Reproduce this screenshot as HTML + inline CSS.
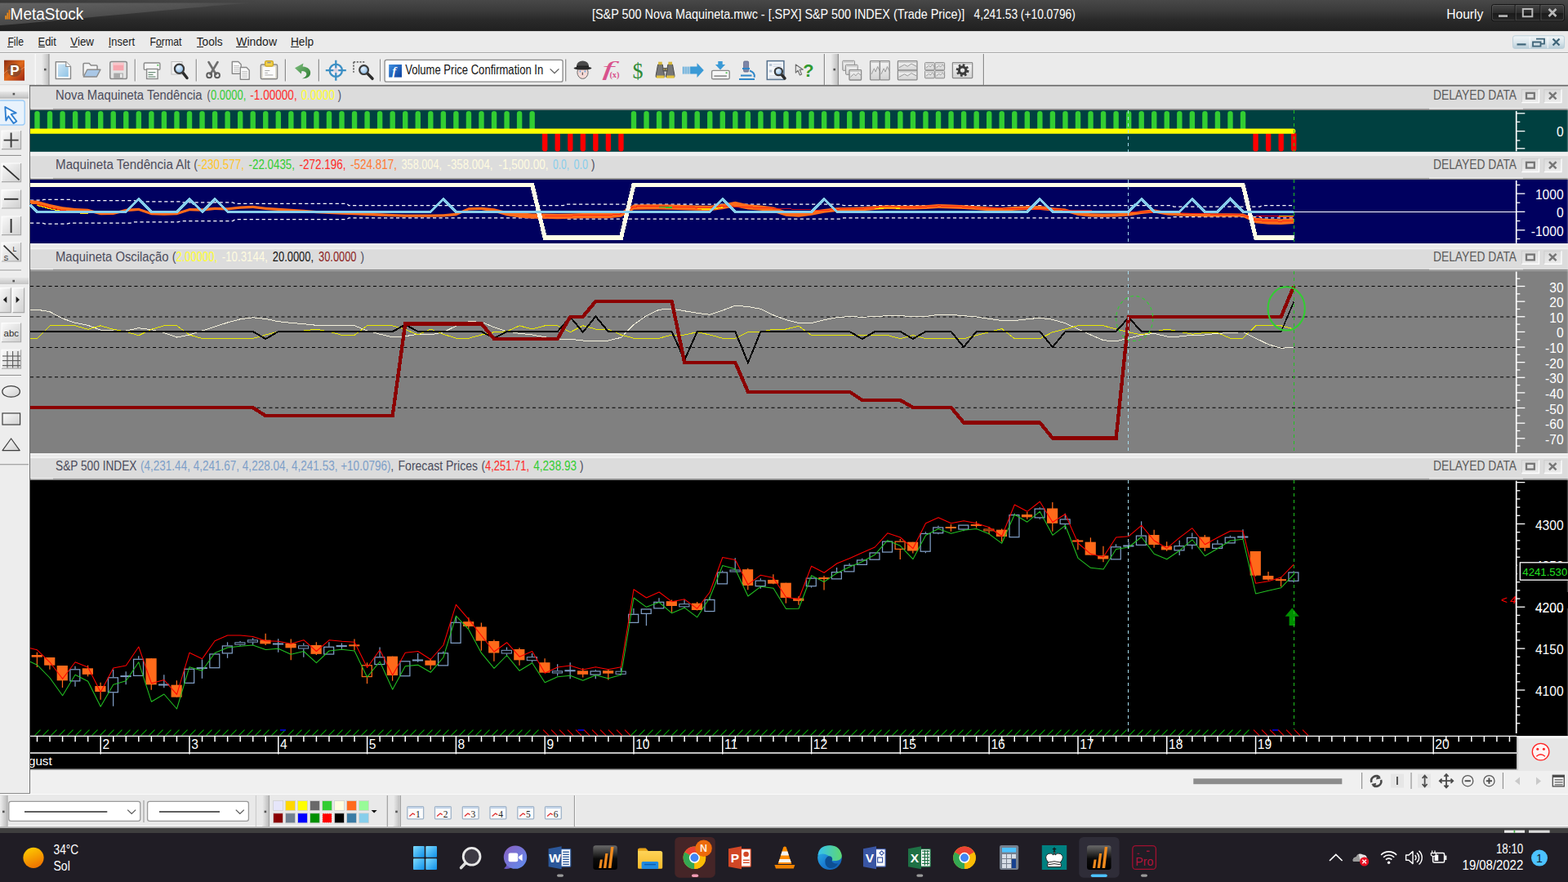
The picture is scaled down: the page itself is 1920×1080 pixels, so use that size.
<!DOCTYPE html>
<html lang="en"><head><meta charset="utf-8"><title>MetaStock - S&amp;P 500 Nova Maquineta</title>
<style>
html,body{margin:0;padding:0;background:#f0f0f0;overflow:hidden}
body{width:1920px;height:1080px}
svg{display:block;position:absolute;left:0;top:0}
text{font-family:"Liberation Sans",sans-serif;white-space:pre}
.c{shape-rendering:crispEdges}
</style></head><body>
<svg width="1920" height="1080" viewBox="0 0 1920 1080">
<defs>
<linearGradient id="gTitle" x1="0" y1="0" x2="0" y2="1">
<stop offset="0" stop-color="#484848"/><stop offset="0.35" stop-color="#3a3a3a"/><stop offset="0.62" stop-color="#2a2a2a"/><stop offset="1" stop-color="#202020"/></linearGradient>
<linearGradient id="gTopL" x1="0" y1="0" x2="1" y2="0"><stop offset="0" stop-color="#000" stop-opacity="0.2"/><stop offset="1" stop-color="#000" stop-opacity="0"/></linearGradient>
<linearGradient id="gGloss" x1="0" y1="0" x2="1" y2="0">
<stop offset="0" stop-color="#fff" stop-opacity="0.17"/><stop offset="0.7" stop-color="#fff" stop-opacity="0.1"/><stop offset="1" stop-color="#fff" stop-opacity="0.03"/></linearGradient>
<linearGradient id="gBtn" x1="0" y1="0" x2="0" y2="1"><stop offset="0" stop-color="#484848"/><stop offset="0.5" stop-color="#2c2c2c"/><stop offset="0.5" stop-color="#1a1a1a"/><stop offset="1" stop-color="#262626"/></linearGradient>
<linearGradient id="gMdi" x1="0" y1="0" x2="0" y2="1"><stop offset="0" stop-color="#f2f6f8"/><stop offset="0.5" stop-color="#dbe6ec"/><stop offset="1" stop-color="#b7ccd7"/></linearGradient>
<linearGradient id="gTool" x1="0" y1="0" x2="1" y2="1"><stop offset="0" stop-color="#fafafa"/><stop offset="1" stop-color="#cfcfcf"/></linearGradient>
<linearGradient id="gGrip" x1="0" y1="0" x2="1" y2="0"><stop offset="0" stop-color="#ebebeb"/><stop offset="1" stop-color="#bdbdbd"/></linearGradient>
<linearGradient id="gGripV" x1="0" y1="0" x2="0" y2="1"><stop offset="0" stop-color="#e6e6e6"/><stop offset="1" stop-color="#c4c4c4"/></linearGradient>
<linearGradient id="gHB" x1="0" y1="0" x2="0" y2="1"><stop offset="0" stop-color="#dadada"/><stop offset="1" stop-color="#ececec"/></linearGradient>
<linearGradient id="gSun" x1="0" y1="0" x2="0.4" y2="1"><stop offset="0" stop-color="#ffd400"/><stop offset="1" stop-color="#f07800"/></linearGradient>
</defs>
<rect x="0.00" y="0.00" width="1920.00" height="1080.00" fill="#f0f0f0" class="c"/>
<rect x="0.00" y="0.00" width="1920.00" height="38.60" fill="url(#gTitle)" />
<path d="M0,3.6 L310,3.6 C250,7 120,21 0,31 Z" fill="url(#gGloss)"/>
<rect x="0" y="0" width="330" height="3.6" fill="url(#gTopL)"/>
<rect x="0.00" y="38.15" width="1920.00" height="26.35" fill="#ebebeb" />
<rect x="0.00" y="64.50" width="1920.00" height="40.00" fill="#ebebeb" class="c"/>
<rect x="0.00" y="64.00" width="1920.00" height="1.00" fill="#a9a9a9" class="c"/>
<rect x="0.00" y="65.00" width="1920.00" height="1.00" fill="#f8f8f8" class="c"/>
<rect x="0.00" y="103.40" width="1920.00" height="1.00" fill="#d4d4d4" />
<rect x="36.00" y="104.00" width="1884.00" height="1.70" fill="#6f6f6f" />
<rect x="0.00" y="104.30" width="36.00" height="1.30" fill="#f2f2f2" />
<rect x="0.00" y="105.60" width="37.00" height="866.40" fill="#ededed" class="c"/>
<rect x="35.90" y="104.20" width="1.30" height="867.80" fill="#707070" />
<rect x="34.90" y="105.60" width="1.00" height="866.40" fill="#f8f8f8" />
<rect x="37.00" y="942.60" width="1883.00" height="29.40" fill="#f0f0f0" />
<rect x="1857.00" y="942.30" width="63.00" height="0.90" fill="#c9c9c9" />
<rect x="0.00" y="972.00" width="1920.00" height="41.50" fill="#e9e9e9" class="c"/>
<rect x="0.00" y="972.00" width="1920.00" height="1.00" fill="#fbfbfb" class="c"/>
<rect x="0.00" y="971.00" width="37.00" height="1.20" fill="#8a8a8a" class="c"/>
<rect x="0.00" y="1010.50" width="1920.00" height="1.50" fill="#fdfdfd" class="c"/>
<rect x="0.00" y="1012.00" width="1920.00" height="1.50" fill="#b4b4b4" class="c"/>
<rect x="0.00" y="1013.50" width="1920.00" height="6.30" fill="#3f3f3f" class="c"/>
<rect x="0.00" y="1019.80" width="1920.00" height="60.20" fill="#201d25" class="c"/>
<rect x="37.00" y="105.60" width="1883.00" height="29.00" fill="#dcdcdc" class="c"/>
<rect x="37.00" y="134.90" width="1883.00" height="50.90" fill="#004040" class="c"/>
<rect x="37.00" y="190.80" width="1883.00" height="28.80" fill="#dcdcdc" class="c"/>
<rect x="37.00" y="219.90" width="1883.00" height="78.50" fill="#00005f" class="c"/>
<rect x="37.00" y="305.00" width="1883.00" height="26.30" fill="#dcdcdc" class="c"/>
<rect x="37.00" y="331.60" width="1883.00" height="223.40" fill="#808080" class="c"/>
<rect x="37.00" y="560.80" width="1883.00" height="26.70" fill="#dcdcdc" class="c"/>
<rect x="37.00" y="587.80" width="1883.00" height="312.70" fill="#000000" class="c"/>
<rect x="37.00" y="185.80" width="1883.00" height="5.30" fill="#f1f1f1" />
<rect x="37.00" y="298.40" width="1883.00" height="6.90" fill="#f1f1f1" />
<rect x="37.00" y="300.40" width="1883.00" height="3.00" fill="#e9e9e9" />
<rect x="37.00" y="555.00" width="1883.00" height="6.10" fill="#f1f1f1" />
<rect x="37.00" y="557.00" width="1883.00" height="2.20" fill="#e9e9e9" />
<rect x="37.00" y="133.40" width="1883.00" height="1.50" fill="#5c5c5c" opacity="0.8"/>
<rect x="38.00" y="132.30" width="27.00" height="1.20" fill="#f4f4f4" />
<rect x="1750.00" y="132.30" width="115.00" height="1.20" fill="#f4f4f4" />
<rect x="37.00" y="218.40" width="1883.00" height="1.50" fill="#5c5c5c" opacity="0.8"/>
<rect x="38.00" y="217.30" width="27.00" height="1.20" fill="#f4f4f4" />
<rect x="1750.00" y="217.30" width="115.00" height="1.20" fill="#f4f4f4" />
<rect x="37.00" y="330.10" width="1883.00" height="1.50" fill="#5c5c5c" opacity="0.8"/>
<rect x="38.00" y="329.00" width="27.00" height="1.20" fill="#f4f4f4" />
<rect x="1750.00" y="329.00" width="115.00" height="1.20" fill="#f4f4f4" />
<rect x="37.00" y="586.30" width="1883.00" height="1.50" fill="#5c5c5c" opacity="0.8"/>
<rect x="38.00" y="585.20" width="27.00" height="1.20" fill="#f4f4f4" />
<rect x="1750.00" y="585.20" width="115.00" height="1.20" fill="#f4f4f4" />
<rect x="1918.80" y="105.60" width="1.20" height="795.00" fill="#e9e9e9" opacity="0.28"/>
<rect x="37.00" y="898.00" width="1820.00" height="43.20" fill="#000" />
<rect x="37.00" y="941.00" width="1820.00" height="1.50" fill="#5a5a5a" />
<rect x="1857.00" y="902.50" width="63.00" height="40.00" fill="#e6e6e6" class="c"/>
<rect x="1857.00" y="902.50" width="63.00" height="1.00" fill="#fafafa" class="c"/>
<rect x="1857.00" y="902.50" width="1.50" height="40.00" fill="#c8c8c8" class="c"/>
<rect x="6.20" y="19.10" width="1.80" height="4.50" fill="#e88a1a" />
<rect x="8.40" y="15.60" width="1.80" height="8.00" fill="#e88a1a" />
<rect x="10.60" y="12.10" width="1.80" height="11.50" fill="#f07d10" />
<text x="12.60" y="23.50" font-size="19.6" fill="#ffffff" textLength="89.6" lengthAdjust="spacingAndGlyphs" >MetaStock</text>
<text x="725.00" y="22.50" font-size="16.2" fill="#ffffff" textLength="456.3" lengthAdjust="spacingAndGlyphs" >[S&amp;P 500 Nova Maquineta.mwc - [.SPX] S&amp;P 500 INDEX (Trade Price)]</text>
<text x="1192.50" y="22.50" font-size="16.2" fill="#ffffff" textLength="124.3" lengthAdjust="spacingAndGlyphs" >4,241.53 (+10.0796)</text>
<text x="1771.30" y="22.50" font-size="16.2" fill="#ffffff" textLength="45.0" lengthAdjust="spacingAndGlyphs" >Hourly</text>
<rect x="1826.5" y="5.5" width="89" height="20.2" rx="3" fill="url(#gBtn)" stroke="#0c0c0c" stroke-width="1"/>
<rect x="1827.3" y="6.3" width="87.4" height="18.6" rx="2.5" fill="none" stroke="#6a6a6a" stroke-width="0.8" opacity="0.7"/>
<line x1="1855.20" y1="6.00" x2="1855.20" y2="25.20" stroke="#0c0c0c" stroke-width="1" />
<line x1="1856.10" y1="6.50" x2="1856.10" y2="24.80" stroke="#5a5a5a" stroke-width="0.8" />
<line x1="1886.00" y1="6.00" x2="1886.00" y2="25.20" stroke="#0c0c0c" stroke-width="1" />
<line x1="1886.90" y1="6.50" x2="1886.90" y2="24.80" stroke="#5a5a5a" stroke-width="0.8" />
<rect x="1835.00" y="18.30" width="11.00" height="2.60" fill="#b9b9b9" />
<rect x="1864.8" y="11" width="11.5" height="9.3" fill="none" stroke="#b9b9b9" stroke-width="2"/>
<path d="M1896.5,11 L1905.5,20 M1905.5,11 L1896.5,20" stroke="#b9b9b9" stroke-width="2.6" fill="none"/>
<rect x="1852.5" y="43.8" width="63" height="15.6" rx="2.5" fill="url(#gMdi)" stroke="#bcd0da" stroke-width="1"/>
<line x1="1873.20" y1="45.00" x2="1873.20" y2="59.00" stroke="#ffffff" stroke-width="1" opacity="0.9"/>
<line x1="1895.20" y1="45.00" x2="1895.20" y2="59.00" stroke="#ffffff" stroke-width="1" opacity="0.9"/>
<rect x="1857.50" y="53.30" width="11.00" height="2.20" fill="#3f6579" />
<path d="M1881,47.6 h10 v6 h-4.5 M1877,51.5 h9.5 v5.2 h-9.5 z" fill="none" stroke="#3f6579" stroke-width="1.8"/>
<path d="M1901.5,47.5 L1909.5,55.5 M1909.5,47.5 L1901.5,55.5" stroke="#3f6579" stroke-width="2.3" fill="none"/>
<text x="9.40" y="55.60" font-size="14.1" fill="#1b1b1b" textLength="19.6" lengthAdjust="spacingAndGlyphs" >File</text>
<rect x="9.40" y="57.40" width="6.60" height="1.00" fill="#1b1b1b" class="c"/>
<text x="46.50" y="55.60" font-size="14.1" fill="#1b1b1b" textLength="22.3" lengthAdjust="spacingAndGlyphs" >Edit</text>
<rect x="46.50" y="57.40" width="8.00" height="1.00" fill="#1b1b1b" class="c"/>
<text x="86.30" y="55.60" font-size="14.1" fill="#1b1b1b" textLength="28.7" lengthAdjust="spacingAndGlyphs" >View</text>
<rect x="86.30" y="57.40" width="9.00" height="1.00" fill="#1b1b1b" class="c"/>
<text x="132.80" y="55.60" font-size="14.1" fill="#1b1b1b" textLength="32.2" lengthAdjust="spacingAndGlyphs" >Insert</text>
<rect x="133.00" y="57.40" width="3.00" height="1.00" fill="#1b1b1b" class="c"/>
<text x="183.50" y="55.60" font-size="14.1" fill="#1b1b1b" textLength="39.0" lengthAdjust="spacingAndGlyphs" >Format</text>
<rect x="190.50" y="57.40" width="8.00" height="1.00" fill="#1b1b1b" class="c"/>
<text x="240.70" y="55.60" font-size="14.1" fill="#1b1b1b" textLength="32.0" lengthAdjust="spacingAndGlyphs" >Tools</text>
<rect x="240.50" y="57.40" width="8.00" height="1.00" fill="#1b1b1b" class="c"/>
<text x="289.30" y="55.60" font-size="14.1" fill="#1b1b1b" textLength="49.7" lengthAdjust="spacingAndGlyphs" >Window</text>
<rect x="289.30" y="57.40" width="13.70" height="1.00" fill="#1b1b1b" class="c"/>
<text x="356.00" y="55.60" font-size="14.1" fill="#1b1b1b" textLength="28.0" lengthAdjust="spacingAndGlyphs" >Help</text>
<rect x="356.00" y="57.40" width="10.00" height="1.00" fill="#1b1b1b" class="c"/>
<text x="68.00" y="122.10" font-size="15.6" fill="#4b4b5b" textLength="179.6" lengthAdjust="spacingAndGlyphs" >Nova Maquineta Tendência</text>
<text x="253.60" y="122.10" font-size="15.6" fill="#4b4b5b" textLength="4.0" lengthAdjust="spacingAndGlyphs" >(</text>
<text x="258.00" y="122.10" font-size="15.6" fill="#32cd32" textLength="43.4" lengthAdjust="spacingAndGlyphs" >0.0000,</text>
<text x="306.30" y="122.10" font-size="15.6" fill="#ff2a2a" textLength="57.4" lengthAdjust="spacingAndGlyphs" >-1.00000,</text>
<text x="368.70" y="122.10" font-size="15.6" fill="#ffff30" textLength="41.3" lengthAdjust="spacingAndGlyphs" >0.0000</text>
<text x="413.80" y="122.10" font-size="15.6" fill="#4b4b5b" textLength="4.2" lengthAdjust="spacingAndGlyphs" >)</text>
<text x="68.00" y="207.00" font-size="15.6" fill="#4b4b5b" textLength="165.0" lengthAdjust="spacingAndGlyphs" >Maquineta Tendência Alt</text>
<text x="237.30" y="207.00" font-size="15.6" fill="#4b4b5b" textLength="4.7" lengthAdjust="spacingAndGlyphs" >(</text>
<text x="242.00" y="207.00" font-size="15.6" fill="#ffc428" textLength="57.0" lengthAdjust="spacingAndGlyphs" >-230.577,</text>
<text x="304.50" y="207.00" font-size="15.6" fill="#32cd32" textLength="56.5" lengthAdjust="spacingAndGlyphs" >-22.0435,</text>
<text x="366.50" y="207.00" font-size="15.6" fill="#ff2a2a" textLength="57.0" lengthAdjust="spacingAndGlyphs" >-272.196,</text>
<text x="429.00" y="207.00" font-size="15.6" fill="#ff7a33" textLength="57.0" lengthAdjust="spacingAndGlyphs" >-524.817,</text>
<text x="491.50" y="207.00" font-size="15.6" fill="#fffbe0" textLength="49.5" lengthAdjust="spacingAndGlyphs" >358.004,</text>
<text x="547.50" y="207.00" font-size="15.6" fill="#fffbe0" textLength="56.0" lengthAdjust="spacingAndGlyphs" >-358.004,</text>
<text x="610.50" y="207.00" font-size="15.6" fill="#fffbe0" textLength="61.0" lengthAdjust="spacingAndGlyphs" >-1,500.00,</text>
<text x="677.00" y="207.00" font-size="15.6" fill="#87ceeb" textLength="20.0" lengthAdjust="spacingAndGlyphs" >0.0,</text>
<text x="702.50" y="207.00" font-size="15.6" fill="#87ceeb" textLength="17.5" lengthAdjust="spacingAndGlyphs" >0.0</text>
<text x="724.00" y="207.00" font-size="15.6" fill="#4b4b5b" textLength="4.5" lengthAdjust="spacingAndGlyphs" >)</text>
<text x="68.00" y="319.80" font-size="15.6" fill="#4b4b5b" textLength="138.5" lengthAdjust="spacingAndGlyphs" >Maquineta Oscilação</text>
<text x="210.70" y="319.80" font-size="15.6" fill="#4b4b5b" textLength="4.8" lengthAdjust="spacingAndGlyphs" >(</text>
<text x="215.50" y="319.80" font-size="15.6" fill="#ffff30" textLength="50.5" lengthAdjust="spacingAndGlyphs" >2.00000,</text>
<text x="271.80" y="319.80" font-size="15.6" fill="#fffbe0" textLength="56.2" lengthAdjust="spacingAndGlyphs" >-10.3144,</text>
<text x="333.80" y="319.80" font-size="15.6" fill="#111111" textLength="50.2" lengthAdjust="spacingAndGlyphs" >20.0000,</text>
<text x="390.00" y="319.80" font-size="15.6" fill="#8b1a1a" textLength="46.5" lengthAdjust="spacingAndGlyphs" >30.0000</text>
<text x="441.50" y="319.80" font-size="15.6" fill="#4b4b5b" textLength="4.5" lengthAdjust="spacingAndGlyphs" >)</text>
<text x="68.00" y="576.00" font-size="15.6" fill="#4b4b5b" textLength="99.5" lengthAdjust="spacingAndGlyphs" >S&amp;P 500 INDEX</text>
<text x="172.00" y="576.00" font-size="15.6" fill="#7d9fc8" textLength="306.5" lengthAdjust="spacingAndGlyphs" >(4,231.44, 4,241.67, 4,228.04, 4,241.53, +10.0796)</text>
<text x="478.50" y="576.00" font-size="15.6" fill="#4b4b5b" textLength="3.5" lengthAdjust="spacingAndGlyphs" >,</text>
<text x="487.50" y="576.00" font-size="15.6" fill="#4b4b5b" textLength="97.5" lengthAdjust="spacingAndGlyphs" >Forecast Prices</text>
<text x="589.50" y="576.00" font-size="15.6" fill="#4b4b5b" textLength="4.5" lengthAdjust="spacingAndGlyphs" >(</text>
<text x="594.00" y="576.00" font-size="15.6" fill="#ff2a2a" textLength="54.0" lengthAdjust="spacingAndGlyphs" >4,251.71,</text>
<text x="653.30" y="576.00" font-size="15.6" fill="#32cd32" textLength="52.7" lengthAdjust="spacingAndGlyphs" >4,238.93</text>
<text x="710.00" y="576.00" font-size="15.6" fill="#4b4b5b" textLength="4.5" lengthAdjust="spacingAndGlyphs" >)</text>
<text x="1755.00" y="122.10" font-size="15.6" fill="#5a5a5a" textLength="102.0" lengthAdjust="spacingAndGlyphs" >DELAYED DATA</text>
<rect x="1863.3" y="109.6" width="21.2" height="16" fill="url(#gHB)"/>
<path d="M1863.3,125.6 v-16 h21.2" fill="none" stroke="#cfcfcf" stroke-width="1.1"/>
<path d="M1863.3,125.6 h21.2 v-16" fill="none" stroke="#ffffff" stroke-width="1.3"/>
<rect x="1869.0" y="113.89999999999999" width="9.8" height="6.8" fill="none" stroke="#767676" stroke-width="2.3"/>
<rect x="1890.8" y="109.6" width="21.2" height="16" fill="url(#gHB)"/>
<path d="M1890.8,125.6 v-16 h21.2" fill="none" stroke="#cfcfcf" stroke-width="1.1"/>
<path d="M1890.8,125.6 h21.2 v-16" fill="none" stroke="#ffffff" stroke-width="1.3"/>
<path d="M1897.0,113.19999999999999 l8.6,8.2 M1905.6,113.19999999999999 l-8.6,8.2" stroke="#767676" stroke-width="2.5" fill="none"/>
<text x="1755.00" y="207.00" font-size="15.6" fill="#5a5a5a" textLength="102.0" lengthAdjust="spacingAndGlyphs" >DELAYED DATA</text>
<rect x="1863.3" y="194.5" width="21.2" height="16" fill="url(#gHB)"/>
<path d="M1863.3,210.5 v-16 h21.2" fill="none" stroke="#cfcfcf" stroke-width="1.1"/>
<path d="M1863.3,210.5 h21.2 v-16" fill="none" stroke="#ffffff" stroke-width="1.3"/>
<rect x="1869.0" y="198.8" width="9.8" height="6.8" fill="none" stroke="#767676" stroke-width="2.3"/>
<rect x="1890.8" y="194.5" width="21.2" height="16" fill="url(#gHB)"/>
<path d="M1890.8,210.5 v-16 h21.2" fill="none" stroke="#cfcfcf" stroke-width="1.1"/>
<path d="M1890.8,210.5 h21.2 v-16" fill="none" stroke="#ffffff" stroke-width="1.3"/>
<path d="M1897.0,198.1 l8.6,8.2 M1905.6,198.1 l-8.6,8.2" stroke="#767676" stroke-width="2.5" fill="none"/>
<text x="1755.00" y="319.80" font-size="15.6" fill="#5a5a5a" textLength="102.0" lengthAdjust="spacingAndGlyphs" >DELAYED DATA</text>
<rect x="1863.3" y="307.3" width="21.2" height="16" fill="url(#gHB)"/>
<path d="M1863.3,323.3 v-16 h21.2" fill="none" stroke="#cfcfcf" stroke-width="1.1"/>
<path d="M1863.3,323.3 h21.2 v-16" fill="none" stroke="#ffffff" stroke-width="1.3"/>
<rect x="1869.0" y="311.6" width="9.8" height="6.8" fill="none" stroke="#767676" stroke-width="2.3"/>
<rect x="1890.8" y="307.3" width="21.2" height="16" fill="url(#gHB)"/>
<path d="M1890.8,323.3 v-16 h21.2" fill="none" stroke="#cfcfcf" stroke-width="1.1"/>
<path d="M1890.8,323.3 h21.2 v-16" fill="none" stroke="#ffffff" stroke-width="1.3"/>
<path d="M1897.0,310.90000000000003 l8.6,8.2 M1905.6,310.90000000000003 l-8.6,8.2" stroke="#767676" stroke-width="2.5" fill="none"/>
<text x="1755.00" y="576.00" font-size="15.6" fill="#5a5a5a" textLength="102.0" lengthAdjust="spacingAndGlyphs" >DELAYED DATA</text>
<rect x="1863.3" y="563.5" width="21.2" height="16" fill="url(#gHB)"/>
<path d="M1863.3,579.5 v-16 h21.2" fill="none" stroke="#cfcfcf" stroke-width="1.1"/>
<path d="M1863.3,579.5 h21.2 v-16" fill="none" stroke="#ffffff" stroke-width="1.3"/>
<rect x="1869.0" y="567.8" width="9.8" height="6.8" fill="none" stroke="#767676" stroke-width="2.3"/>
<rect x="1890.8" y="563.5" width="21.2" height="16" fill="url(#gHB)"/>
<path d="M1890.8,579.5 v-16 h21.2" fill="none" stroke="#cfcfcf" stroke-width="1.1"/>
<path d="M1890.8,579.5 h21.2 v-16" fill="none" stroke="#ffffff" stroke-width="1.3"/>
<path d="M1897.0,567.1 l8.6,8.2 M1905.6,567.1 l-8.6,8.2" stroke="#767676" stroke-width="2.5" fill="none"/>
<path d="M42.30,158.1 V139.3 a3.2,3.2 0 0 1 6.4,0 V158.1 Z" fill="#32cd32"/>
<path d="M57.84,158.1 V139.3 a3.2,3.2 0 0 1 6.4,0 V158.1 Z" fill="#32cd32"/>
<path d="M73.38,158.1 V139.3 a3.2,3.2 0 0 1 6.4,0 V158.1 Z" fill="#32cd32"/>
<path d="M88.93,158.1 V139.3 a3.2,3.2 0 0 1 6.4,0 V158.1 Z" fill="#32cd32"/>
<path d="M104.47,158.1 V139.3 a3.2,3.2 0 0 1 6.4,0 V158.1 Z" fill="#32cd32"/>
<path d="M120.01,158.1 V139.3 a3.2,3.2 0 0 1 6.4,0 V158.1 Z" fill="#32cd32"/>
<path d="M135.55,158.1 V139.3 a3.2,3.2 0 0 1 6.4,0 V158.1 Z" fill="#32cd32"/>
<path d="M151.10,158.1 V139.3 a3.2,3.2 0 0 1 6.4,0 V158.1 Z" fill="#32cd32"/>
<path d="M166.64,158.1 V139.3 a3.2,3.2 0 0 1 6.4,0 V158.1 Z" fill="#32cd32"/>
<path d="M182.18,158.1 V139.3 a3.2,3.2 0 0 1 6.4,0 V158.1 Z" fill="#32cd32"/>
<path d="M197.72,158.1 V139.3 a3.2,3.2 0 0 1 6.4,0 V158.1 Z" fill="#32cd32"/>
<path d="M213.27,158.1 V139.3 a3.2,3.2 0 0 1 6.4,0 V158.1 Z" fill="#32cd32"/>
<path d="M228.81,158.1 V139.3 a3.2,3.2 0 0 1 6.4,0 V158.1 Z" fill="#32cd32"/>
<path d="M244.35,158.1 V139.3 a3.2,3.2 0 0 1 6.4,0 V158.1 Z" fill="#32cd32"/>
<path d="M259.89,158.1 V139.3 a3.2,3.2 0 0 1 6.4,0 V158.1 Z" fill="#32cd32"/>
<path d="M275.44,158.1 V139.3 a3.2,3.2 0 0 1 6.4,0 V158.1 Z" fill="#32cd32"/>
<path d="M290.98,158.1 V139.3 a3.2,3.2 0 0 1 6.4,0 V158.1 Z" fill="#32cd32"/>
<path d="M306.52,158.1 V139.3 a3.2,3.2 0 0 1 6.4,0 V158.1 Z" fill="#32cd32"/>
<path d="M322.06,158.1 V139.3 a3.2,3.2 0 0 1 6.4,0 V158.1 Z" fill="#32cd32"/>
<path d="M337.61,158.1 V139.3 a3.2,3.2 0 0 1 6.4,0 V158.1 Z" fill="#32cd32"/>
<path d="M353.15,158.1 V139.3 a3.2,3.2 0 0 1 6.4,0 V158.1 Z" fill="#32cd32"/>
<path d="M368.69,158.1 V139.3 a3.2,3.2 0 0 1 6.4,0 V158.1 Z" fill="#32cd32"/>
<path d="M384.23,158.1 V139.3 a3.2,3.2 0 0 1 6.4,0 V158.1 Z" fill="#32cd32"/>
<path d="M399.78,158.1 V139.3 a3.2,3.2 0 0 1 6.4,0 V158.1 Z" fill="#32cd32"/>
<path d="M415.32,158.1 V139.3 a3.2,3.2 0 0 1 6.4,0 V158.1 Z" fill="#32cd32"/>
<path d="M430.86,158.1 V139.3 a3.2,3.2 0 0 1 6.4,0 V158.1 Z" fill="#32cd32"/>
<path d="M446.40,158.1 V139.3 a3.2,3.2 0 0 1 6.4,0 V158.1 Z" fill="#32cd32"/>
<path d="M461.94,158.1 V139.3 a3.2,3.2 0 0 1 6.4,0 V158.1 Z" fill="#32cd32"/>
<path d="M477.49,158.1 V139.3 a3.2,3.2 0 0 1 6.4,0 V158.1 Z" fill="#32cd32"/>
<path d="M493.03,158.1 V139.3 a3.2,3.2 0 0 1 6.4,0 V158.1 Z" fill="#32cd32"/>
<path d="M508.57,158.1 V139.3 a3.2,3.2 0 0 1 6.4,0 V158.1 Z" fill="#32cd32"/>
<path d="M524.11,158.1 V139.3 a3.2,3.2 0 0 1 6.4,0 V158.1 Z" fill="#32cd32"/>
<path d="M539.66,158.1 V139.3 a3.2,3.2 0 0 1 6.4,0 V158.1 Z" fill="#32cd32"/>
<path d="M555.20,158.1 V139.3 a3.2,3.2 0 0 1 6.4,0 V158.1 Z" fill="#32cd32"/>
<path d="M570.74,158.1 V139.3 a3.2,3.2 0 0 1 6.4,0 V158.1 Z" fill="#32cd32"/>
<path d="M586.28,158.1 V139.3 a3.2,3.2 0 0 1 6.4,0 V158.1 Z" fill="#32cd32"/>
<path d="M601.83,158.1 V139.3 a3.2,3.2 0 0 1 6.4,0 V158.1 Z" fill="#32cd32"/>
<path d="M617.37,158.1 V139.3 a3.2,3.2 0 0 1 6.4,0 V158.1 Z" fill="#32cd32"/>
<path d="M632.91,158.1 V139.3 a3.2,3.2 0 0 1 6.4,0 V158.1 Z" fill="#32cd32"/>
<path d="M648.45,158.1 V139.3 a3.2,3.2 0 0 1 6.4,0 V158.1 Z" fill="#32cd32"/>
<path d="M664.00,163.3 V182.3 a3.2,3.2 0 0 0 6.4,0 V163.3 Z" fill="#ff0000"/>
<path d="M679.54,163.3 V182.3 a3.2,3.2 0 0 0 6.4,0 V163.3 Z" fill="#ff0000"/>
<path d="M695.08,163.3 V182.3 a3.2,3.2 0 0 0 6.4,0 V163.3 Z" fill="#ff0000"/>
<path d="M710.62,163.3 V182.3 a3.2,3.2 0 0 0 6.4,0 V163.3 Z" fill="#ff0000"/>
<path d="M726.17,163.3 V182.3 a3.2,3.2 0 0 0 6.4,0 V163.3 Z" fill="#ff0000"/>
<path d="M741.71,163.3 V182.3 a3.2,3.2 0 0 0 6.4,0 V163.3 Z" fill="#ff0000"/>
<path d="M757.25,163.3 V182.3 a3.2,3.2 0 0 0 6.4,0 V163.3 Z" fill="#ff0000"/>
<path d="M772.79,158.1 V139.3 a3.2,3.2 0 0 1 6.4,0 V158.1 Z" fill="#32cd32"/>
<path d="M788.34,158.1 V139.3 a3.2,3.2 0 0 1 6.4,0 V158.1 Z" fill="#32cd32"/>
<path d="M803.88,158.1 V139.3 a3.2,3.2 0 0 1 6.4,0 V158.1 Z" fill="#32cd32"/>
<path d="M819.42,158.1 V139.3 a3.2,3.2 0 0 1 6.4,0 V158.1 Z" fill="#32cd32"/>
<path d="M834.96,158.1 V139.3 a3.2,3.2 0 0 1 6.4,0 V158.1 Z" fill="#32cd32"/>
<path d="M850.50,158.1 V139.3 a3.2,3.2 0 0 1 6.4,0 V158.1 Z" fill="#32cd32"/>
<path d="M866.05,158.1 V139.3 a3.2,3.2 0 0 1 6.4,0 V158.1 Z" fill="#32cd32"/>
<path d="M881.59,158.1 V139.3 a3.2,3.2 0 0 1 6.4,0 V158.1 Z" fill="#32cd32"/>
<path d="M897.13,158.1 V139.3 a3.2,3.2 0 0 1 6.4,0 V158.1 Z" fill="#32cd32"/>
<path d="M912.67,158.1 V139.3 a3.2,3.2 0 0 1 6.4,0 V158.1 Z" fill="#32cd32"/>
<path d="M928.22,158.1 V139.3 a3.2,3.2 0 0 1 6.4,0 V158.1 Z" fill="#32cd32"/>
<path d="M943.76,158.1 V139.3 a3.2,3.2 0 0 1 6.4,0 V158.1 Z" fill="#32cd32"/>
<path d="M959.30,158.1 V139.3 a3.2,3.2 0 0 1 6.4,0 V158.1 Z" fill="#32cd32"/>
<path d="M974.84,158.1 V139.3 a3.2,3.2 0 0 1 6.4,0 V158.1 Z" fill="#32cd32"/>
<path d="M990.39,158.1 V139.3 a3.2,3.2 0 0 1 6.4,0 V158.1 Z" fill="#32cd32"/>
<path d="M1005.93,158.1 V139.3 a3.2,3.2 0 0 1 6.4,0 V158.1 Z" fill="#32cd32"/>
<path d="M1021.47,158.1 V139.3 a3.2,3.2 0 0 1 6.4,0 V158.1 Z" fill="#32cd32"/>
<path d="M1037.01,158.1 V139.3 a3.2,3.2 0 0 1 6.4,0 V158.1 Z" fill="#32cd32"/>
<path d="M1052.56,158.1 V139.3 a3.2,3.2 0 0 1 6.4,0 V158.1 Z" fill="#32cd32"/>
<path d="M1068.10,158.1 V139.3 a3.2,3.2 0 0 1 6.4,0 V158.1 Z" fill="#32cd32"/>
<path d="M1083.64,158.1 V139.3 a3.2,3.2 0 0 1 6.4,0 V158.1 Z" fill="#32cd32"/>
<path d="M1099.18,158.1 V139.3 a3.2,3.2 0 0 1 6.4,0 V158.1 Z" fill="#32cd32"/>
<path d="M1114.73,158.1 V139.3 a3.2,3.2 0 0 1 6.4,0 V158.1 Z" fill="#32cd32"/>
<path d="M1130.27,158.1 V139.3 a3.2,3.2 0 0 1 6.4,0 V158.1 Z" fill="#32cd32"/>
<path d="M1145.81,158.1 V139.3 a3.2,3.2 0 0 1 6.4,0 V158.1 Z" fill="#32cd32"/>
<path d="M1161.35,158.1 V139.3 a3.2,3.2 0 0 1 6.4,0 V158.1 Z" fill="#32cd32"/>
<path d="M1176.90,158.1 V139.3 a3.2,3.2 0 0 1 6.4,0 V158.1 Z" fill="#32cd32"/>
<path d="M1192.44,158.1 V139.3 a3.2,3.2 0 0 1 6.4,0 V158.1 Z" fill="#32cd32"/>
<path d="M1207.98,158.1 V139.3 a3.2,3.2 0 0 1 6.4,0 V158.1 Z" fill="#32cd32"/>
<path d="M1223.52,158.1 V139.3 a3.2,3.2 0 0 1 6.4,0 V158.1 Z" fill="#32cd32"/>
<path d="M1239.06,158.1 V139.3 a3.2,3.2 0 0 1 6.4,0 V158.1 Z" fill="#32cd32"/>
<path d="M1254.61,158.1 V139.3 a3.2,3.2 0 0 1 6.4,0 V158.1 Z" fill="#32cd32"/>
<path d="M1270.15,158.1 V139.3 a3.2,3.2 0 0 1 6.4,0 V158.1 Z" fill="#32cd32"/>
<path d="M1285.69,158.1 V139.3 a3.2,3.2 0 0 1 6.4,0 V158.1 Z" fill="#32cd32"/>
<path d="M1301.23,158.1 V139.3 a3.2,3.2 0 0 1 6.4,0 V158.1 Z" fill="#32cd32"/>
<path d="M1316.78,158.1 V139.3 a3.2,3.2 0 0 1 6.4,0 V158.1 Z" fill="#32cd32"/>
<path d="M1332.32,158.1 V139.3 a3.2,3.2 0 0 1 6.4,0 V158.1 Z" fill="#32cd32"/>
<path d="M1347.86,158.1 V139.3 a3.2,3.2 0 0 1 6.4,0 V158.1 Z" fill="#32cd32"/>
<path d="M1363.40,158.1 V139.3 a3.2,3.2 0 0 1 6.4,0 V158.1 Z" fill="#32cd32"/>
<path d="M1378.95,158.1 V139.3 a3.2,3.2 0 0 1 6.4,0 V158.1 Z" fill="#32cd32"/>
<path d="M1394.49,158.1 V139.3 a3.2,3.2 0 0 1 6.4,0 V158.1 Z" fill="#32cd32"/>
<path d="M1410.03,158.1 V139.3 a3.2,3.2 0 0 1 6.4,0 V158.1 Z" fill="#32cd32"/>
<path d="M1425.57,158.1 V139.3 a3.2,3.2 0 0 1 6.4,0 V158.1 Z" fill="#32cd32"/>
<path d="M1441.12,158.1 V139.3 a3.2,3.2 0 0 1 6.4,0 V158.1 Z" fill="#32cd32"/>
<path d="M1456.66,158.1 V139.3 a3.2,3.2 0 0 1 6.4,0 V158.1 Z" fill="#32cd32"/>
<path d="M1472.20,158.1 V139.3 a3.2,3.2 0 0 1 6.4,0 V158.1 Z" fill="#32cd32"/>
<path d="M1487.74,158.1 V139.3 a3.2,3.2 0 0 1 6.4,0 V158.1 Z" fill="#32cd32"/>
<path d="M1503.29,158.1 V139.3 a3.2,3.2 0 0 1 6.4,0 V158.1 Z" fill="#32cd32"/>
<path d="M1518.83,158.1 V139.3 a3.2,3.2 0 0 1 6.4,0 V158.1 Z" fill="#32cd32"/>
<path d="M1534.37,163.3 V182.3 a3.2,3.2 0 0 0 6.4,0 V163.3 Z" fill="#ff0000"/>
<path d="M1549.91,163.3 V182.3 a3.2,3.2 0 0 0 6.4,0 V163.3 Z" fill="#ff0000"/>
<path d="M1565.46,163.3 V182.3 a3.2,3.2 0 0 0 6.4,0 V163.3 Z" fill="#ff0000"/>
<path d="M1581.00,163.3 V182.3 a3.2,3.2 0 0 0 6.4,0 V163.3 Z" fill="#ff0000"/>
<path d="M37,157.6 H1583.2 a3.1,3.1 0 0 1 0,6.200000000000017 H37 Z" fill="#ffff00"/>
<polyline points="37.0,245.2 52.0,245.2 53.0,244.3 88.0,244.3 90.0,245.5 163.0,245.5 175.0,246.9 220.0,246.9 222.0,247.8 285.0,247.8 288.0,249.4 425.0,249.4 427.0,251.7 690.0,251.7 692.0,250.1 1030.0,250.1 1033.0,251.7 1435.0,251.7 1437.0,253.0 1543.0,253.0 1545.0,251.7 1584.2,251.7" fill="none" stroke="#ffffff" stroke-width="1.25" stroke-dasharray="4.2 3.3"/>
<polyline points="37.0,273.1 52.0,273.1 55.0,274.2 82.0,274.2 86.0,273.0 160.0,273.0 164.0,271.9 218.0,271.9 222.0,270.5 285.0,270.5 288.0,268.6 425.0,268.6 427.0,266.8 690.0,266.8 692.0,268.0 1030.0,268.0 1033.0,266.8 1435.0,266.8 1437.0,265.5 1543.0,265.5 1545.0,266.8 1584.2,266.8" fill="none" stroke="#ffffff" stroke-width="1.25" stroke-dasharray="4.2 3.3"/>
<polygon points="37.0,244.97 45.5,245.80 61.0,249.97 76.6,253.30 92.1,254.97 107.7,255.80 123.2,259.97 138.8,259.63 154.3,255.80 169.8,254.63 185.4,259.97 200.9,260.30 216.5,259.97 232.0,254.97 247.6,255.30 263.1,253.63 278.6,254.13 294.2,252.47 309.7,251.63 325.3,253.63 340.8,254.63 356.3,255.80 371.9,256.63 387.4,257.97 403.0,258.63 418.5,259.30 434.1,259.97 449.6,260.63 465.1,261.30 480.7,261.97 496.2,262.47 511.8,262.47 527.3,262.47 542.9,262.13 558.4,260.80 573.9,254.13 589.5,253.63 605.0,255.30 620.6,258.97 636.1,260.13 651.7,261.47 667.2,261.47 682.7,261.80 698.3,261.47 713.8,260.97 729.4,260.97 744.9,260.97 760.5,259.30 776.0,250.47 791.5,250.13 807.1,250.13 822.6,250.47 838.2,250.97 853.7,251.47 869.2,251.80 884.8,249.80 900.3,246.80 915.9,250.13 931.4,251.47 947.0,253.47 962.5,258.47 978.0,260.20 993.6,258.03 1009.1,255.93 1024.7,254.27 1040.2,253.93 1055.8,253.43 1071.3,252.27 1086.8,251.27 1102.4,251.77 1117.9,251.77 1133.5,251.27 1149.0,250.10 1164.6,250.60 1180.1,251.27 1195.6,252.27 1211.2,253.43 1226.7,254.27 1242.3,252.93 1257.8,252.27 1273.3,252.10 1288.9,254.23 1304.4,255.40 1320.0,259.90 1335.5,261.23 1351.1,261.57 1366.6,261.23 1382.1,260.40 1397.7,257.90 1413.2,256.23 1428.8,259.23 1444.3,260.40 1459.9,260.90 1475.4,261.23 1490.9,261.23 1506.5,261.23 1522.0,261.57 1537.6,266.70 1553.1,268.03 1568.7,268.37 1584.2,267.37 1584.2,273.97 1568.7,274.97 1553.1,274.63 1537.6,273.30 1522.0,265.77 1506.5,265.43 1490.9,265.43 1475.4,265.43 1459.9,265.10 1444.3,264.60 1428.8,263.43 1413.2,260.43 1397.7,262.10 1382.1,264.60 1366.6,265.43 1351.1,265.77 1335.5,265.43 1320.0,264.10 1304.4,259.60 1288.9,258.43 1273.3,256.90 1257.8,257.07 1242.3,257.73 1226.7,259.07 1211.2,258.23 1195.6,257.07 1180.1,256.07 1164.6,255.40 1149.0,254.90 1133.5,256.07 1117.9,256.57 1102.4,256.57 1086.8,256.07 1071.3,257.07 1055.8,258.23 1040.2,258.73 1024.7,259.07 1009.1,260.73 993.6,263.63 978.0,265.80 962.5,264.87 947.0,259.87 931.4,257.87 915.9,256.53 900.3,253.20 884.8,256.20 869.2,258.20 853.7,257.87 838.2,257.37 822.6,256.87 807.1,256.53 791.5,256.53 776.0,256.87 760.5,265.70 744.9,267.37 729.4,267.37 713.8,267.37 698.3,267.87 682.7,268.20 667.2,267.87 651.7,267.87 636.1,266.53 620.6,264.37 605.0,259.70 589.5,257.03 573.9,257.53 558.4,264.20 542.9,265.53 527.3,265.87 511.8,265.87 496.2,265.87 480.7,265.37 465.1,264.70 449.6,264.03 434.1,263.37 418.5,262.70 403.0,262.03 387.4,261.37 371.9,260.03 356.3,259.20 340.8,258.03 325.3,257.03 309.7,255.03 294.2,255.87 278.6,257.53 263.1,257.03 247.6,258.70 232.0,258.37 216.5,263.37 200.9,263.70 185.4,263.37 169.8,258.03 154.3,259.20 138.8,263.03 123.2,263.37 107.7,259.20 92.1,258.37 76.6,256.70 61.0,253.37 45.5,249.20 37.0,248.37" fill="#ff6a1a"/>
<polyline points="37.0,247.9 45.5,248.7 61.0,252.9 76.6,256.2 92.1,257.9 107.7,258.7" fill="none" stroke="#ff6a1a" stroke-width="3.0" class="c" />
<polyline points="45.5,250.1 61.0,254.3 76.6,257.6 92.1,259.3" fill="none" stroke="#ff2a00" stroke-width="1.2" class="c" />
<polyline points="45.5,251.4 61.0,255.6 76.6,258.9 92.1,260.6 107.7,261.4" fill="none" stroke="#ffd800" stroke-width="1.2" class="c" />
<polyline points="667.2,264.1 682.7,264.4 698.3,264.1 713.8,263.6 729.4,263.6 744.9,263.6 760.5,261.9 776.0,253.1 791.5,252.7 807.1,252.7 822.6,253.1 838.2,253.6 853.7,254.1 869.2,254.4 884.8,252.4 1009.1,257.7 1024.7,256.1 1040.2,255.7 1055.8,255.2 1071.3,254.1 1086.8,253.1 1102.4,253.6 1117.9,253.6 1133.5,253.1 1149.0,251.9 1164.6,252.4 1180.1,253.1 1195.6,254.1 1522.0,263.1 1537.6,269.4 1553.1,270.7 1568.7,271.1 1584.2,270.1" fill="none" stroke="#ff1010" stroke-width="1.0" class="c" opacity="0.75"/>
<polyline points="1071.3,255.5 1086.8,254.5 1102.4,255.0" fill="none" stroke="#ffe000" stroke-width="1.4" class="c" />
<polyline points="698.3,265.5" fill="none" stroke="#30c030" stroke-width="1.4" class="c" />
<polyline points="853.7,255.7 869.2,256.0 884.8,254.0" fill="none" stroke="#ffd800" stroke-width="1.4" class="c" />
<polyline points="807.1,253.6 822.6,254.0" fill="none" stroke="#30c030" stroke-width="1.4" class="c" />
<polyline points="1537.6,264.2 1584.2,265.4" fill="none" stroke="#ff0000" stroke-width="1.2" class="c" />
<polyline points="1565.7,264.4 1584.2,264.6" fill="none" stroke="#ffd800" stroke-width="1.6" class="c" />
<polyline points="37.0,226.3 651.7,226.3 667.2,291.0 760.5,291.0 776.0,226.3 1522.0,226.3 1537.6,291.0 1584.7,291.0" fill="none" stroke="#fffde6" stroke-width="5.2" class="c" stroke-linejoin="miter"/>
<line x1="1584.20" y1="259.65" x2="1856.50" y2="259.65" stroke="#ffffff" stroke-width="1.1" class="c" />
<polyline points="37.0,250.8 45.5,259.2 61.0,259.2 76.6,259.2 92.1,259.2 107.7,259.2 123.2,259.2 138.8,259.2 154.3,259.2 169.8,243.7 185.4,259.2 200.9,259.2 216.5,259.2 232.0,243.7 247.6,259.2 263.1,243.7 278.6,259.2 294.2,259.2 309.7,259.2 325.3,259.2 340.8,259.2 356.3,259.2 371.9,259.2 387.4,259.2 403.0,259.2 418.5,259.2 434.1,259.2 449.6,259.2 465.1,259.2 480.7,259.2 496.2,259.2 511.8,259.2 527.3,259.2 542.9,243.7 558.4,259.2 573.9,259.2 589.5,259.2 605.0,259.2 620.6,259.2 636.1,259.2 651.7,259.2 667.2,259.2 682.7,259.2 698.3,259.2 713.8,259.2 729.4,259.2 744.9,259.2 760.5,259.2 776.0,259.2 791.5,259.2 807.1,259.2 822.6,259.2 838.2,259.2 853.7,259.2 869.2,259.2 884.8,243.7 900.3,259.2 915.9,259.2 931.4,259.2 947.0,259.2 962.5,259.2 978.0,259.2 993.6,259.2 1009.1,243.7 1024.7,259.2 1040.2,259.2 1055.8,259.2 1071.3,259.2 1086.8,259.2 1102.4,259.2 1117.9,259.2 1133.5,259.2 1149.0,259.2 1164.6,259.2 1180.1,259.2 1195.6,259.2 1211.2,259.2 1226.7,259.2 1242.3,259.2 1257.8,259.2 1273.3,243.7 1288.9,259.2 1304.4,259.2 1320.0,259.2 1335.5,259.2 1351.1,259.2 1366.6,259.2 1382.1,259.2 1397.7,243.7 1413.2,259.2 1428.8,259.2 1444.3,259.2 1459.9,243.7 1475.4,259.2 1490.9,259.2 1506.5,243.7 1522.0,259.2 1537.6,259.2 1553.1,259.2 1568.7,259.2 1584.2,259.2" fill="none" stroke="#87ceeb" stroke-width="3.3" class="c" stroke-linejoin="miter"/>
<line x1="37.00" y1="350.50" x2="1856.50" y2="350.50" stroke="#000000" stroke-width="1" stroke-dasharray="4 3.5"/>
<line x1="37.00" y1="388.00" x2="1856.50" y2="388.00" stroke="#000000" stroke-width="1" stroke-dasharray="4 3.5"/>
<line x1="37.00" y1="425.50" x2="1856.50" y2="425.50" stroke="#000000" stroke-width="1" stroke-dasharray="4 3.5"/>
<line x1="37.00" y1="461.75" x2="1856.50" y2="461.75" stroke="#000000" stroke-width="1" stroke-dasharray="4 3.5"/>
<line x1="37.00" y1="499.25" x2="1856.50" y2="499.25" stroke="#000000" stroke-width="1" stroke-dasharray="4 3.5"/>
<polyline points="37.0,379.2 45.5,379.2 61.0,381.7 76.6,390.0 92.1,395.3 107.7,398.3 123.2,404.2 138.8,405.0 154.3,405.0 169.8,401.7 185.4,403.7 200.9,407.5 216.5,413.0 232.0,410.0 247.6,405.0 263.1,400.0 278.6,395.0 294.2,390.8 309.7,388.8 325.3,390.5 340.8,393.7 356.3,395.3 371.9,396.7 387.4,398.3 403.0,398.8 418.5,398.8 434.1,398.8 449.6,405.0 465.1,409.2 480.7,412.8 496.2,411.7 511.8,409.2 527.3,410.0 542.9,406.7 558.4,399.2 573.9,393.7 589.5,394.2 605.0,400.8 620.6,405.8 636.1,408.3 651.7,410.0 667.2,412.8 682.7,415.3 698.3,415.3 713.8,417.0 729.4,417.0 744.9,417.0 760.5,413.3 776.0,397.5 791.5,386.7 807.1,379.2 822.6,378.0 838.2,380.8 853.7,383.3 869.2,385.3 884.8,380.0 900.3,374.2 915.9,375.5 931.4,378.3 947.0,385.8 962.5,391.7 978.0,395.5 993.6,395.5 1009.1,391.7 1024.7,388.7 1040.2,387.5 1055.8,388.3 1071.3,387.5 1086.8,386.7 1102.4,386.7 1117.9,387.5 1133.5,387.5 1149.0,385.3 1164.6,385.3 1180.1,386.7 1195.6,388.0 1211.2,390.3 1226.7,392.5 1242.3,392.5 1257.8,390.8 1273.3,389.2 1288.9,391.3 1304.4,395.8 1320.0,403.0 1335.5,410.0 1351.1,416.7 1366.6,417.8 1382.1,414.2 1397.7,410.3 1413.2,408.3 1428.8,412.0 1444.3,412.0 1459.9,410.3 1475.4,410.0 1490.9,408.3 1506.5,407.5 1522.0,406.7 1537.6,414.2 1553.1,421.7 1568.7,426.3 1584.2,425.3" fill="none" stroke="#f4f0dc" stroke-width="1.0" class="c" stroke-linejoin="miter"/>
<polyline points="37.0,414.5 45.5,414.5 61.0,398.8 76.6,398.8 92.1,398.8 107.7,403.3 123.2,398.8 138.8,403.3 154.3,406.2 169.8,410.8 185.4,403.3 200.9,398.8 216.5,398.8 232.0,410.0 247.6,414.5 263.1,414.5 278.6,414.5 294.2,414.5 309.7,414.5 325.3,410.0 340.8,406.2 356.3,406.2 371.9,405.0 387.4,403.0 403.0,406.2 418.5,410.3 434.1,410.3 449.6,398.8 465.1,398.8 480.7,398.8 496.2,403.3 511.8,410.0 527.3,403.0 542.9,409.2 558.4,414.2 573.9,414.2 589.5,410.0 605.0,406.7 620.6,405.8 636.1,398.8 651.7,403.0 667.2,398.8 682.7,398.8 698.3,406.7 713.8,398.8 729.4,403.0 744.9,403.0 760.5,410.0 776.0,414.2 791.5,414.2 807.1,414.2 822.6,410.0 838.2,410.0 853.7,406.7 869.2,410.0 884.8,414.2 900.3,414.2 915.9,406.7 931.4,406.7 947.0,403.0 962.5,403.0 978.0,399.2 993.6,410.5 1009.1,410.5 1024.7,410.5 1040.2,410.5 1055.8,410.5 1071.3,410.5 1086.8,410.5 1102.4,414.7 1117.9,410.5 1133.5,414.7 1149.0,414.7 1164.6,414.7 1180.1,414.7 1195.6,410.5 1211.2,406.7 1226.7,402.5 1242.3,414.7 1257.8,414.7 1273.3,414.7 1288.9,406.7 1304.4,403.0 1320.0,398.8 1335.5,398.8 1351.1,398.8 1366.6,403.0 1382.1,406.7 1397.7,410.0 1413.2,406.2 1428.8,403.0 1444.3,406.2 1459.9,409.2 1475.4,407.5 1490.9,407.5 1506.5,414.2 1522.0,414.2 1537.6,398.8 1553.1,398.8 1568.7,398.8 1584.2,403.0" fill="none" stroke="#e8e800" stroke-width="1.0" class="c" stroke-linejoin="miter"/>
<polyline points="37.0,406.0 45.5,406.0 61.0,406.0 76.6,406.0 92.1,406.0 107.7,406.0 123.2,406.0 138.8,406.0 154.3,406.0 169.8,406.0 185.4,406.0 200.9,406.0 216.5,406.0 232.0,406.0 247.6,406.0 263.1,406.0 278.6,406.0 294.2,406.0 309.7,406.0 325.3,415.0 340.8,406.0 356.3,406.0 371.9,406.0 387.4,406.0 403.0,406.0 418.5,406.0 434.1,406.0 449.6,406.0 465.1,406.0 480.7,406.0 496.2,397.5 511.8,406.0 527.3,406.0 542.9,406.0 558.4,406.0 573.9,406.0 589.5,406.0 605.0,414.2 620.6,406.0 636.1,406.0 651.7,406.0 667.2,406.0 682.7,406.0 698.3,388.3 713.8,406.7 729.4,387.5 744.9,406.0 760.5,406.0 776.0,406.0 791.5,406.0 807.1,406.0 822.6,406.0 838.2,440.8 853.7,406.0 869.2,406.0 884.8,406.0 900.3,406.0 915.9,444.2 931.4,406.0 947.0,406.0 962.5,406.0 978.0,406.0 993.6,406.0 1009.1,406.0 1024.7,406.0 1040.2,406.0 1055.8,415.0 1071.3,406.0 1086.8,406.0 1102.4,406.0 1117.9,415.0 1133.5,406.0 1149.0,406.0 1164.6,406.0 1180.1,425.0 1195.6,406.0 1211.2,406.0 1226.7,406.0 1242.3,406.0 1257.8,406.0 1273.3,406.0 1288.9,425.0 1304.4,406.0 1320.0,406.0 1335.5,406.0 1351.1,406.0 1366.6,406.0 1382.1,388.8 1397.7,406.0 1413.2,406.0 1428.8,406.0 1444.3,406.0 1459.9,406.0 1475.4,406.0 1490.9,406.0 1506.5,406.0 1522.0,406.0 1537.6,406.0 1553.1,406.0 1568.7,406.0" fill="none" stroke="#000000" stroke-width="2.0" class="c" stroke-linejoin="miter"/>
<polyline points="1568.7,406.0 1584.2,369.7" fill="none" stroke="#000" stroke-width="1.5" class="c" />
<polyline points="37.0,499.2 45.5,499.2 61.0,499.2 76.6,499.2 92.1,499.2 107.7,499.2 123.2,499.2 138.8,499.2 154.3,499.2 169.8,499.2 185.4,499.2 200.9,499.2 216.5,499.2 232.0,499.2 247.6,499.2 263.1,499.2 278.6,499.2 294.2,499.2 309.7,499.2 325.3,509.2 340.8,509.2 356.3,509.2 371.9,509.2 387.4,509.2 403.0,509.2 418.5,509.2 434.1,509.2 449.6,509.2 465.1,509.2 480.7,509.2 496.2,396.4 511.8,396.4 527.3,396.4 542.9,396.4 558.4,396.4 573.9,396.4 589.5,396.4 605.0,415.0 620.6,415.0 636.1,415.0 651.7,415.0 667.2,415.0 682.7,415.0 698.3,387.7 713.8,387.7 729.4,368.9 744.9,368.9 760.5,368.9 776.0,368.9 791.5,368.9 807.1,368.9 822.6,368.9 838.2,443.9 853.7,443.9 869.2,443.9 884.8,443.9 900.3,443.9 915.9,479.7 931.4,479.7 947.0,479.7 962.5,479.7 978.0,479.7 993.6,479.7 1009.1,479.7 1024.7,479.7 1040.2,479.7 1055.8,490.0 1071.3,490.0 1086.8,490.0 1102.4,490.0 1117.9,498.9 1133.5,498.9 1149.0,498.9 1164.6,498.9 1180.1,517.5 1195.6,517.5 1211.2,517.5 1226.7,517.5 1242.3,517.5 1257.8,517.5 1273.3,517.5 1288.9,536.5 1304.4,536.5 1320.0,536.5 1335.5,536.5 1351.1,536.5 1366.6,536.5 1382.1,387.7 1397.7,387.7 1413.2,387.7 1428.8,387.7 1444.3,387.7 1459.9,387.7 1475.4,387.7 1490.9,387.7 1506.5,387.7 1522.0,387.7 1537.6,387.7 1553.1,387.7 1568.7,387.7 1584.2,350.5" fill="none" stroke="#8b0000" stroke-width="4.3" class="c" stroke-linejoin="miter"/>
<ellipse cx="1389.2" cy="390" rx="22.5" ry="27.5" fill="none" stroke="#32cd32" stroke-width="1.1" stroke-dasharray="4 3.5"/>
<ellipse cx="1575.2" cy="377.9" rx="22.6" ry="26.6" fill="none" stroke="#32cd32" stroke-width="2.1"/>
<line x1="45.40" y1="798.67" x2="45.40" y2="817.00" stroke="#ff6a1a" stroke-width="1.25" />
<rect x="38.60" y="802.00" width="13.20" height="2.67" fill="#ff6a1a" />
<line x1="60.94" y1="805.00" x2="60.94" y2="819.67" stroke="#ff6a1a" stroke-width="1.25" />
<rect x="54.14" y="805.00" width="13.20" height="9.67" fill="#ff6a1a" />
<line x1="76.48" y1="815.00" x2="76.48" y2="842.00" stroke="#ff6a1a" stroke-width="1.25" />
<rect x="69.68" y="815.00" width="13.20" height="18.33" fill="#ff6a1a" />
<line x1="92.03" y1="815.83" x2="92.03" y2="819.17" stroke="#7f9dc4" stroke-width="1.25" />
<line x1="92.03" y1="834.50" x2="92.03" y2="840.83" stroke="#7f9dc4" stroke-width="1.25" />
<rect x="85.85" y="819.79" width="11.95" height="14.08" fill="none" stroke="#7f9dc4" stroke-width="1.25"/>
<line x1="107.57" y1="814.67" x2="107.57" y2="828.33" stroke="#ff6a1a" stroke-width="1.25" />
<rect x="100.77" y="818.33" width="13.20" height="7.50" fill="#ff6a1a" />
<line x1="123.11" y1="835.83" x2="123.11" y2="856.67" stroke="#ff6a1a" stroke-width="1.25" />
<rect x="116.31" y="840.00" width="13.20" height="7.00" fill="#ff6a1a" />
<line x1="138.65" y1="819.67" x2="138.65" y2="829.17" stroke="#7f9dc4" stroke-width="1.25" />
<line x1="138.65" y1="848.33" x2="138.65" y2="864.67" stroke="#7f9dc4" stroke-width="1.25" />
<rect x="132.48" y="829.79" width="11.95" height="17.92" fill="none" stroke="#7f9dc4" stroke-width="1.25"/>
<line x1="154.20" y1="822.17" x2="154.20" y2="838.33" stroke="#7f9dc4" stroke-width="1.25" />
<rect x="147.40" y="827.08" width="13.20" height="2.00" fill="#7f9dc4" />
<line x1="169.74" y1="803.33" x2="169.74" y2="806.67" stroke="#7f9dc4" stroke-width="1.25" />
<rect x="163.56" y="807.29" width="11.95" height="20.08" fill="none" stroke="#7f9dc4" stroke-width="1.25"/>
<line x1="185.28" y1="806.17" x2="185.28" y2="844.67" stroke="#ff6a1a" stroke-width="1.25" />
<rect x="178.48" y="806.17" width="13.20" height="32.17" fill="#ff6a1a" />
<line x1="200.82" y1="826.17" x2="200.82" y2="842.17" stroke="#7f9dc4" stroke-width="1.25" />
<rect x="194.02" y="837.50" width="13.20" height="2.00" fill="#7f9dc4" />
<line x1="216.37" y1="833.33" x2="216.37" y2="853.67" stroke="#ff6a1a" stroke-width="1.25" />
<rect x="209.57" y="838.67" width="13.20" height="15.00" fill="#ff6a1a" />
<rect x="225.73" y="819.29" width="11.95" height="17.08" fill="none" stroke="#7f9dc4" stroke-width="1.25"/>
<line x1="247.45" y1="807.50" x2="247.45" y2="830.83" stroke="#7f9dc4" stroke-width="1.25" />
<rect x="240.65" y="817.08" width="13.20" height="2.00" fill="#7f9dc4" />
<rect x="256.82" y="800.96" width="11.95" height="16.75" fill="none" stroke="#7f9dc4" stroke-width="1.25"/>
<line x1="278.54" y1="786.33" x2="278.54" y2="790.33" stroke="#7f9dc4" stroke-width="1.25" />
<line x1="278.54" y1="800.50" x2="278.54" y2="805.83" stroke="#7f9dc4" stroke-width="1.25" />
<rect x="272.36" y="790.96" width="11.95" height="8.92" fill="none" stroke="#7f9dc4" stroke-width="1.25"/>
<line x1="294.08" y1="785.00" x2="294.08" y2="786.33" stroke="#7f9dc4" stroke-width="1.25" />
<line x1="294.08" y1="789.67" x2="294.08" y2="790.83" stroke="#7f9dc4" stroke-width="1.25" />
<rect x="287.78" y="786.83" width="12.20" height="2.33" fill="none" stroke="#7f9dc4" stroke-width="1.0"/>
<line x1="309.62" y1="781.33" x2="309.62" y2="783.33" stroke="#7f9dc4" stroke-width="1.25" />
<line x1="309.62" y1="786.67" x2="309.62" y2="789.67" stroke="#7f9dc4" stroke-width="1.25" />
<rect x="303.32" y="783.83" width="12.20" height="2.33" fill="none" stroke="#7f9dc4" stroke-width="1.0"/>
<line x1="325.16" y1="775.83" x2="325.16" y2="790.00" stroke="#ff6a1a" stroke-width="1.25" />
<rect x="318.36" y="783.67" width="13.20" height="4.67" fill="#ff6a1a" />
<line x1="340.71" y1="782.17" x2="340.71" y2="798.67" stroke="#7f9dc4" stroke-width="1.25" />
<rect x="333.91" y="787.50" width="13.20" height="2.00" fill="#7f9dc4" />
<line x1="356.25" y1="782.50" x2="356.25" y2="808.33" stroke="#ff6a1a" stroke-width="1.25" />
<rect x="349.45" y="788.00" width="13.20" height="5.33" fill="#ff6a1a" />
<line x1="371.79" y1="787.50" x2="371.79" y2="790.33" stroke="#7f9dc4" stroke-width="1.25" />
<line x1="371.79" y1="794.50" x2="371.79" y2="804.67" stroke="#7f9dc4" stroke-width="1.25" />
<rect x="365.49" y="790.83" width="12.20" height="3.17" fill="none" stroke="#7f9dc4" stroke-width="1.0"/>
<line x1="387.33" y1="786.33" x2="387.33" y2="802.00" stroke="#ff6a1a" stroke-width="1.25" />
<rect x="380.53" y="790.00" width="13.20" height="10.83" fill="#ff6a1a" />
<line x1="402.88" y1="786.33" x2="402.88" y2="791.67" stroke="#7f9dc4" stroke-width="1.25" />
<rect x="396.70" y="792.29" width="11.95" height="8.75" fill="none" stroke="#7f9dc4" stroke-width="1.25"/>
<line x1="418.42" y1="787.50" x2="418.42" y2="794.67" stroke="#7f9dc4" stroke-width="1.25" />
<rect x="411.62" y="790.08" width="13.20" height="2.00" fill="#7f9dc4" />
<line x1="433.96" y1="782.50" x2="433.96" y2="796.33" stroke="#ff6a1a" stroke-width="1.25" />
<rect x="427.16" y="789.33" width="13.20" height="2.00" fill="#ff6a1a" />
<line x1="449.50" y1="811.33" x2="449.50" y2="814.17" stroke="#ff6a1a" stroke-width="1.25" />
<line x1="449.50" y1="829.17" x2="449.50" y2="837.17" stroke="#ff6a1a" stroke-width="1.25" />
<rect x="443.33" y="814.79" width="11.95" height="13.75" fill="none" stroke="#ff6a1a" stroke-width="1.25"/>
<line x1="465.04" y1="792.50" x2="465.04" y2="804.17" stroke="#7f9dc4" stroke-width="1.25" />
<rect x="458.87" y="804.79" width="11.95" height="8.75" fill="none" stroke="#7f9dc4" stroke-width="1.25"/>
<line x1="480.59" y1="803.67" x2="480.59" y2="833.67" stroke="#ff6a1a" stroke-width="1.25" />
<rect x="473.79" y="803.67" width="13.20" height="23.33" fill="#ff6a1a" />
<rect x="489.95" y="809.79" width="11.95" height="17.92" fill="none" stroke="#7f9dc4" stroke-width="1.25"/>
<line x1="511.67" y1="800.00" x2="511.67" y2="810.83" stroke="#7f9dc4" stroke-width="1.25" />
<rect x="504.87" y="807.50" width="13.20" height="2.00" fill="#7f9dc4" />
<line x1="527.21" y1="806.67" x2="527.21" y2="819.67" stroke="#ff6a1a" stroke-width="1.25" />
<rect x="520.41" y="808.67" width="13.20" height="6.00" fill="#ff6a1a" />
<line x1="542.76" y1="797.50" x2="542.76" y2="799.17" stroke="#7f9dc4" stroke-width="1.25" />
<rect x="536.58" y="799.79" width="11.95" height="15.08" fill="none" stroke="#7f9dc4" stroke-width="1.25"/>
<line x1="558.30" y1="755.83" x2="558.30" y2="761.67" stroke="#7f9dc4" stroke-width="1.25" />
<rect x="552.12" y="762.29" width="11.95" height="25.08" fill="none" stroke="#7f9dc4" stroke-width="1.25"/>
<line x1="573.84" y1="756.33" x2="573.84" y2="769.67" stroke="#ff6a1a" stroke-width="1.25" />
<rect x="567.04" y="761.17" width="13.20" height="5.83" fill="#ff6a1a" />
<line x1="589.38" y1="762.50" x2="589.38" y2="796.67" stroke="#ff6a1a" stroke-width="1.25" />
<rect x="582.58" y="767.50" width="13.20" height="17.17" fill="#ff6a1a" />
<line x1="604.93" y1="783.33" x2="604.93" y2="809.67" stroke="#ff6a1a" stroke-width="1.25" />
<rect x="598.13" y="785.00" width="13.20" height="14.50" fill="#ff6a1a" />
<line x1="620.47" y1="792.50" x2="620.47" y2="795.83" stroke="#7f9dc4" stroke-width="1.25" />
<line x1="620.47" y1="800.50" x2="620.47" y2="802.50" stroke="#7f9dc4" stroke-width="1.25" />
<rect x="614.17" y="796.33" width="12.20" height="3.67" fill="none" stroke="#7f9dc4" stroke-width="1.0"/>
<line x1="636.01" y1="793.33" x2="636.01" y2="814.67" stroke="#ff6a1a" stroke-width="1.25" />
<rect x="629.21" y="795.00" width="13.20" height="13.33" fill="#ff6a1a" />
<line x1="651.55" y1="800.00" x2="651.55" y2="804.17" stroke="#7f9dc4" stroke-width="1.25" />
<line x1="651.55" y1="809.17" x2="651.55" y2="810.83" stroke="#7f9dc4" stroke-width="1.25" />
<rect x="645.25" y="804.67" width="12.20" height="4.00" fill="none" stroke="#7f9dc4" stroke-width="1.0"/>
<line x1="667.10" y1="806.17" x2="667.10" y2="823.67" stroke="#ff6a1a" stroke-width="1.25" />
<rect x="660.30" y="811.17" width="13.20" height="12.50" fill="#ff6a1a" />
<line x1="682.64" y1="813.33" x2="682.64" y2="821.33" stroke="#7f9dc4" stroke-width="1.25" />
<line x1="682.64" y1="824.50" x2="682.64" y2="827.50" stroke="#7f9dc4" stroke-width="1.25" />
<rect x="676.34" y="821.83" width="12.20" height="2.17" fill="none" stroke="#7f9dc4" stroke-width="1.0"/>
<line x1="698.18" y1="811.17" x2="698.18" y2="831.17" stroke="#7f9dc4" stroke-width="1.25" />
<rect x="691.38" y="820.25" width="13.20" height="2.00" fill="#7f9dc4" />
<line x1="713.72" y1="818.33" x2="713.72" y2="829.50" stroke="#ff6a1a" stroke-width="1.25" />
<rect x="706.92" y="821.33" width="13.20" height="4.50" fill="#ff6a1a" />
<line x1="729.27" y1="820.00" x2="729.27" y2="821.33" stroke="#7f9dc4" stroke-width="1.25" />
<line x1="729.27" y1="826.67" x2="729.27" y2="831.17" stroke="#7f9dc4" stroke-width="1.25" />
<rect x="723.09" y="821.96" width="11.95" height="4.08" fill="none" stroke="#7f9dc4" stroke-width="1.25"/>
<line x1="744.81" y1="819.67" x2="744.81" y2="832.50" stroke="#ff6a1a" stroke-width="1.25" />
<rect x="738.01" y="821.17" width="13.20" height="3.50" fill="#ff6a1a" />
<line x1="760.35" y1="817.50" x2="760.35" y2="821.67" stroke="#7f9dc4" stroke-width="1.25" />
<line x1="760.35" y1="825.83" x2="760.35" y2="826.67" stroke="#7f9dc4" stroke-width="1.25" />
<rect x="754.05" y="822.17" width="12.20" height="3.17" fill="none" stroke="#7f9dc4" stroke-width="1.0"/>
<line x1="775.89" y1="745.00" x2="775.89" y2="751.67" stroke="#7f9dc4" stroke-width="1.25" />
<rect x="769.72" y="752.29" width="11.95" height="10.08" fill="none" stroke="#7f9dc4" stroke-width="1.25"/>
<line x1="791.44" y1="752.00" x2="791.44" y2="766.17" stroke="#7f9dc4" stroke-width="1.25" />
<rect x="785.26" y="745.96" width="11.95" height="5.42" fill="none" stroke="#7f9dc4" stroke-width="1.25"/>
<line x1="806.98" y1="732.17" x2="806.98" y2="736.67" stroke="#7f9dc4" stroke-width="1.25" />
<rect x="800.80" y="737.29" width="11.95" height="7.58" fill="none" stroke="#7f9dc4" stroke-width="1.25"/>
<line x1="822.52" y1="734.50" x2="822.52" y2="749.67" stroke="#ff6a1a" stroke-width="1.25" />
<rect x="815.72" y="736.17" width="13.20" height="5.83" fill="#ff6a1a" />
<line x1="838.06" y1="734.17" x2="838.06" y2="739.17" stroke="#7f9dc4" stroke-width="1.25" />
<line x1="838.06" y1="743.33" x2="838.06" y2="745.00" stroke="#7f9dc4" stroke-width="1.25" />
<rect x="831.76" y="739.67" width="12.20" height="3.17" fill="none" stroke="#7f9dc4" stroke-width="1.0"/>
<line x1="853.60" y1="737.00" x2="853.60" y2="747.50" stroke="#ff6a1a" stroke-width="1.25" />
<rect x="846.80" y="738.67" width="13.20" height="8.33" fill="#ff6a1a" />
<line x1="869.15" y1="730.83" x2="869.15" y2="733.83" stroke="#7f9dc4" stroke-width="1.25" />
<rect x="862.97" y="734.46" width="11.95" height="14.08" fill="none" stroke="#7f9dc4" stroke-width="1.25"/>
<line x1="884.69" y1="698.67" x2="884.69" y2="700.33" stroke="#7f9dc4" stroke-width="1.25" />
<rect x="878.51" y="700.96" width="11.95" height="13.92" fill="none" stroke="#7f9dc4" stroke-width="1.25"/>
<line x1="900.23" y1="683.33" x2="900.23" y2="697.50" stroke="#7f9dc4" stroke-width="1.25" />
<line x1="900.23" y1="700.50" x2="900.23" y2="700.83" stroke="#7f9dc4" stroke-width="1.25" />
<rect x="893.93" y="698.00" width="12.20" height="2.00" fill="none" stroke="#7f9dc4" stroke-width="1.0"/>
<line x1="915.77" y1="695.83" x2="915.77" y2="722.17" stroke="#ff6a1a" stroke-width="1.25" />
<rect x="908.97" y="697.17" width="13.20" height="19.83" fill="#ff6a1a" />
<line x1="931.32" y1="708.33" x2="931.32" y2="710.50" stroke="#7f9dc4" stroke-width="1.25" />
<line x1="931.32" y1="718.33" x2="931.32" y2="720.83" stroke="#7f9dc4" stroke-width="1.25" />
<rect x="925.14" y="711.12" width="11.95" height="6.58" fill="none" stroke="#7f9dc4" stroke-width="1.25"/>
<line x1="946.86" y1="703.33" x2="946.86" y2="715.33" stroke="#ff6a1a" stroke-width="1.25" />
<rect x="940.06" y="710.00" width="13.20" height="4.67" fill="#ff6a1a" />
<line x1="962.40" y1="713.67" x2="962.40" y2="738.67" stroke="#ff6a1a" stroke-width="1.25" />
<rect x="955.60" y="713.67" width="13.20" height="18.33" fill="#ff6a1a" />
<line x1="977.94" y1="730.00" x2="977.94" y2="740.83" stroke="#ff6a1a" stroke-width="1.25" />
<rect x="971.14" y="732.50" width="13.20" height="3.33" fill="#ff6a1a" />
<line x1="993.49" y1="706.67" x2="993.49" y2="707.50" stroke="#7f9dc4" stroke-width="1.25" />
<line x1="993.49" y1="718.33" x2="993.49" y2="719.67" stroke="#7f9dc4" stroke-width="1.25" />
<rect x="987.31" y="708.12" width="11.95" height="9.58" fill="none" stroke="#7f9dc4" stroke-width="1.25"/>
<line x1="1009.03" y1="705.00" x2="1009.03" y2="722.50" stroke="#ff6a1a" stroke-width="1.25" />
<rect x="1002.23" y="707.08" width="13.20" height="2.00" fill="#ff6a1a" />
<line x1="1024.57" y1="695.00" x2="1024.57" y2="700.00" stroke="#7f9dc4" stroke-width="1.25" />
<rect x="1018.40" y="700.62" width="11.95" height="8.25" fill="none" stroke="#7f9dc4" stroke-width="1.25"/>
<line x1="1040.11" y1="689.67" x2="1040.11" y2="691.67" stroke="#7f9dc4" stroke-width="1.25" />
<rect x="1033.94" y="692.29" width="11.95" height="7.58" fill="none" stroke="#7f9dc4" stroke-width="1.25"/>
<line x1="1055.66" y1="683.67" x2="1055.66" y2="685.33" stroke="#7f9dc4" stroke-width="1.25" />
<rect x="1049.48" y="685.96" width="11.95" height="5.42" fill="none" stroke="#7f9dc4" stroke-width="1.25"/>
<rect x="1065.02" y="676.96" width="11.95" height="8.25" fill="none" stroke="#7f9dc4" stroke-width="1.25"/>
<rect x="1080.57" y="663.12" width="11.95" height="12.92" fill="none" stroke="#7f9dc4" stroke-width="1.25"/>
<line x1="1102.28" y1="660.00" x2="1102.28" y2="662.50" stroke="#ff6a1a" stroke-width="1.25" />
<line x1="1102.28" y1="673.00" x2="1102.28" y2="685.00" stroke="#ff6a1a" stroke-width="1.25" />
<rect x="1096.11" y="663.12" width="11.95" height="9.25" fill="none" stroke="#ff6a1a" stroke-width="1.25"/>
<line x1="1117.83" y1="663.67" x2="1117.83" y2="677.50" stroke="#ff6a1a" stroke-width="1.25" />
<rect x="1111.03" y="663.67" width="13.20" height="10.83" fill="#ff6a1a" />
<line x1="1133.37" y1="651.33" x2="1133.37" y2="652.83" stroke="#7f9dc4" stroke-width="1.25" />
<line x1="1133.37" y1="675.83" x2="1133.37" y2="677.17" stroke="#7f9dc4" stroke-width="1.25" />
<rect x="1127.19" y="653.46" width="11.95" height="21.75" fill="none" stroke="#7f9dc4" stroke-width="1.25"/>
<line x1="1148.91" y1="643.67" x2="1148.91" y2="645.33" stroke="#7f9dc4" stroke-width="1.25" />
<line x1="1148.91" y1="653.33" x2="1148.91" y2="654.17" stroke="#7f9dc4" stroke-width="1.25" />
<rect x="1142.74" y="645.96" width="11.95" height="6.75" fill="none" stroke="#7f9dc4" stroke-width="1.25"/>
<line x1="1164.45" y1="642.00" x2="1164.45" y2="650.83" stroke="#ff6a1a" stroke-width="1.25" />
<rect x="1157.65" y="645.00" width="13.20" height="2.00" fill="#ff6a1a" />
<line x1="1180.00" y1="648.67" x2="1180.00" y2="650.33" stroke="#7f9dc4" stroke-width="1.25" />
<rect x="1173.82" y="643.12" width="11.95" height="4.92" fill="none" stroke="#7f9dc4" stroke-width="1.25"/>
<line x1="1195.54" y1="638.33" x2="1195.54" y2="646.33" stroke="#ff6a1a" stroke-width="1.25" />
<rect x="1188.74" y="642.08" width="13.20" height="2.00" fill="#ff6a1a" />
<line x1="1211.08" y1="645.00" x2="1211.08" y2="647.50" stroke="#ff6a1a" stroke-width="1.25" />
<line x1="1211.08" y1="650.33" x2="1211.08" y2="654.17" stroke="#ff6a1a" stroke-width="1.25" />
<rect x="1204.78" y="648.00" width="12.20" height="1.83" fill="none" stroke="#ff6a1a" stroke-width="1.0"/>
<line x1="1226.62" y1="647.50" x2="1226.62" y2="663.33" stroke="#ff6a1a" stroke-width="1.25" />
<rect x="1219.82" y="648.67" width="13.20" height="8.33" fill="#ff6a1a" />
<line x1="1242.16" y1="628.67" x2="1242.16" y2="630.00" stroke="#7f9dc4" stroke-width="1.25" />
<rect x="1235.99" y="630.62" width="11.95" height="27.08" fill="none" stroke="#7f9dc4" stroke-width="1.25"/>
<line x1="1257.71" y1="627.00" x2="1257.71" y2="635.83" stroke="#ff6a1a" stroke-width="1.25" />
<rect x="1250.91" y="630.00" width="13.20" height="3.33" fill="#ff6a1a" />
<line x1="1273.25" y1="621.17" x2="1273.25" y2="622.50" stroke="#7f9dc4" stroke-width="1.25" />
<line x1="1273.25" y1="634.50" x2="1273.25" y2="635.83" stroke="#7f9dc4" stroke-width="1.25" />
<rect x="1267.07" y="623.12" width="11.95" height="10.75" fill="none" stroke="#7f9dc4" stroke-width="1.25"/>
<line x1="1288.79" y1="615.00" x2="1288.79" y2="650.83" stroke="#ff6a1a" stroke-width="1.25" />
<rect x="1281.99" y="622.50" width="13.20" height="18.33" fill="#ff6a1a" />
<line x1="1304.33" y1="628.67" x2="1304.33" y2="635.33" stroke="#7f9dc4" stroke-width="1.25" />
<line x1="1304.33" y1="642.17" x2="1304.33" y2="648.33" stroke="#7f9dc4" stroke-width="1.25" />
<rect x="1298.16" y="635.96" width="11.95" height="5.58" fill="none" stroke="#7f9dc4" stroke-width="1.25"/>
<line x1="1319.88" y1="660.00" x2="1319.88" y2="673.33" stroke="#ff6a1a" stroke-width="1.25" />
<rect x="1313.08" y="661.50" width="13.20" height="2.00" fill="#ff6a1a" />
<line x1="1335.42" y1="658.33" x2="1335.42" y2="679.67" stroke="#ff6a1a" stroke-width="1.25" />
<rect x="1328.62" y="663.67" width="13.20" height="16.00" fill="#ff6a1a" />
<line x1="1350.96" y1="668.67" x2="1350.96" y2="688.33" stroke="#ff6a1a" stroke-width="1.25" />
<rect x="1344.16" y="680.33" width="13.20" height="4.17" fill="#ff6a1a" />
<line x1="1366.50" y1="666.33" x2="1366.50" y2="669.17" stroke="#7f9dc4" stroke-width="1.25" />
<rect x="1360.33" y="669.79" width="11.95" height="15.08" fill="none" stroke="#7f9dc4" stroke-width="1.25"/>
<line x1="1382.05" y1="664.17" x2="1382.05" y2="671.67" stroke="#7f9dc4" stroke-width="1.25" />
<rect x="1375.25" y="667.50" width="13.20" height="2.00" fill="#7f9dc4" />
<line x1="1397.59" y1="638.33" x2="1397.59" y2="655.50" stroke="#7f9dc4" stroke-width="1.25" />
<rect x="1391.41" y="656.12" width="11.95" height="11.25" fill="none" stroke="#7f9dc4" stroke-width="1.25"/>
<line x1="1413.13" y1="648.67" x2="1413.13" y2="670.83" stroke="#ff6a1a" stroke-width="1.25" />
<rect x="1406.33" y="655.00" width="13.20" height="12.00" fill="#ff6a1a" />
<line x1="1428.67" y1="663.33" x2="1428.67" y2="674.67" stroke="#ff6a1a" stroke-width="1.25" />
<rect x="1421.87" y="668.67" width="13.20" height="4.67" fill="#ff6a1a" />
<line x1="1444.22" y1="661.67" x2="1444.22" y2="668.00" stroke="#7f9dc4" stroke-width="1.25" />
<line x1="1444.22" y1="674.50" x2="1444.22" y2="680.00" stroke="#7f9dc4" stroke-width="1.25" />
<rect x="1438.04" y="668.62" width="11.95" height="5.25" fill="none" stroke="#7f9dc4" stroke-width="1.25"/>
<line x1="1459.76" y1="652.50" x2="1459.76" y2="657.83" stroke="#7f9dc4" stroke-width="1.25" />
<line x1="1459.76" y1="668.00" x2="1459.76" y2="672.50" stroke="#7f9dc4" stroke-width="1.25" />
<rect x="1453.58" y="658.46" width="11.95" height="8.92" fill="none" stroke="#7f9dc4" stroke-width="1.25"/>
<line x1="1475.30" y1="655.00" x2="1475.30" y2="674.67" stroke="#ff6a1a" stroke-width="1.25" />
<rect x="1468.50" y="657.50" width="13.20" height="13.33" fill="#ff6a1a" />
<line x1="1490.84" y1="661.33" x2="1490.84" y2="665.50" stroke="#7f9dc4" stroke-width="1.25" />
<rect x="1484.67" y="666.12" width="11.95" height="5.25" fill="none" stroke="#7f9dc4" stroke-width="1.25"/>
<line x1="1506.39" y1="655.83" x2="1506.39" y2="657.50" stroke="#7f9dc4" stroke-width="1.25" />
<rect x="1500.21" y="658.12" width="11.95" height="6.75" fill="none" stroke="#7f9dc4" stroke-width="1.25"/>
<line x1="1521.93" y1="648.33" x2="1521.93" y2="660.00" stroke="#7f9dc4" stroke-width="1.25" />
<rect x="1515.13" y="656.50" width="13.20" height="2.00" fill="#7f9dc4" />
<line x1="1537.47" y1="675.00" x2="1537.47" y2="705.83" stroke="#ff6a1a" stroke-width="1.25" />
<rect x="1530.67" y="675.00" width="13.20" height="29.67" fill="#ff6a1a" />
<line x1="1553.01" y1="700.00" x2="1553.01" y2="710.83" stroke="#ff6a1a" stroke-width="1.25" />
<rect x="1546.21" y="705.00" width="13.20" height="4.67" fill="#ff6a1a" />
<line x1="1568.56" y1="706.67" x2="1568.56" y2="718.33" stroke="#ff6a1a" stroke-width="1.25" />
<rect x="1561.76" y="709.17" width="13.20" height="2.00" fill="#ff6a1a" />
<line x1="1584.10" y1="699.17" x2="1584.10" y2="700.33" stroke="#7f9dc4" stroke-width="1.25" />
<line x1="1584.10" y1="712.00" x2="1584.10" y2="713.33" stroke="#7f9dc4" stroke-width="1.25" />
<rect x="1577.92" y="700.96" width="11.95" height="10.42" fill="none" stroke="#7f9dc4" stroke-width="1.25"/>
<polyline points="37.0,810.3 45.5,814.2 61.0,830.0 76.6,851.7 92.1,826.3 107.7,834.2 123.2,865.3 138.8,838.3 154.3,833.7 169.8,810.8 185.4,859.2 200.9,850.0 216.5,868.0 232.0,816.7 247.6,821.2 263.1,799.5 278.6,793.0 294.2,791.3 309.7,790.0 325.3,795.5 340.8,794.2 356.3,801.3 371.9,797.5 387.4,811.7 403.0,797.0 418.5,795.3 434.1,797.0 449.6,829.2 465.1,810.0 480.7,844.2 496.2,815.8 511.8,814.2 527.3,823.3 542.9,805.0 558.4,754.2 573.9,770.8 589.5,799.7 605.0,818.3 620.6,802.5 636.1,821.3 651.7,811.7 667.2,835.8 682.7,828.8 698.3,827.2 713.8,833.3 729.4,826.7 744.9,830.8 760.5,826.3 776.0,732.0 791.5,743.3 807.1,737.5 822.6,750.8 838.2,744.2 853.7,755.8 869.2,731.7 884.8,692.5 900.3,696.7 915.9,730.0 931.4,718.3 947.0,720.3 962.5,745.5 978.0,745.3 993.6,704.7 1009.1,712.5 1024.7,701.7 1040.2,694.2 1055.8,687.8 1071.3,679.2 1086.8,661.7 1102.4,668.3 1117.9,684.7 1133.5,655.5 1149.0,647.5 1164.6,653.3 1180.1,649.2 1195.6,647.5 1211.2,653.8 1226.7,665.3 1242.3,630.0 1257.8,639.2 1273.3,626.3 1288.9,655.3 1304.4,643.3 1320.0,683.3 1335.5,695.3 1351.1,697.0 1366.6,672.5 1382.1,670.0 1397.7,657.5 1413.2,678.3 1428.8,684.7 1444.3,674.2 1459.9,660.8 1475.4,680.8 1490.9,671.7 1506.5,662.0 1522.0,660.3 1537.6,727.0 1553.1,723.3 1568.7,719.7 1584.2,703.3" fill="none" stroke="#22c022" stroke-width="1.05" stroke-linejoin="round"/>
<polyline points="37.0,793.7 45.5,795.8 61.0,810.8 76.6,831.3 92.1,810.8 107.7,817.0 123.2,847.5 138.8,818.0 154.3,815.0 169.8,792.0 185.4,836.7 200.9,832.5 216.5,850.3 232.0,799.2 247.6,806.7 263.1,784.7 278.6,778.0 294.2,778.0 309.7,779.5 325.3,784.7 340.8,785.3 356.3,788.3 371.9,783.7 387.4,797.5 403.0,783.8 418.5,785.3 434.1,786.2 449.6,817.5 465.1,795.8 480.7,826.7 496.2,799.2 511.8,797.5 527.3,807.5 542.9,790.0 558.4,740.3 573.9,758.3 589.5,778.3 605.0,798.0 620.6,786.7 636.1,804.2 651.7,797.5 667.2,824.2 682.7,817.0 698.3,815.0 713.8,820.0 729.4,816.7 744.9,819.7 760.5,816.7 776.0,721.7 791.5,732.0 807.1,725.0 822.6,736.7 838.2,733.8 853.7,745.3 869.2,725.0 884.8,682.5 900.3,685.5 915.9,715.8 931.4,704.2 947.0,707.5 962.5,731.3 978.0,733.7 993.6,693.3 1009.1,701.3 1024.7,690.0 1040.2,683.7 1055.8,676.7 1071.3,670.0 1086.8,652.8 1102.4,658.0 1117.9,671.7 1133.5,640.8 1149.0,633.8 1164.6,640.8 1180.1,637.8 1195.6,640.8 1211.2,645.8 1226.7,656.7 1242.3,618.0 1257.8,626.3 1273.3,614.2 1288.9,639.5 1304.4,629.5 1320.0,665.0 1335.5,678.3 1351.1,682.0 1366.6,658.0 1382.1,656.7 1397.7,643.3 1413.2,662.0 1428.8,671.3 1444.3,658.3 1459.9,646.7 1475.4,666.7 1490.9,658.3 1506.5,650.3 1522.0,650.3 1537.6,714.2 1553.1,711.7 1568.7,707.0 1584.2,691.2" fill="none" stroke="#ff0000" stroke-width="1.05" stroke-linejoin="round"/>
<line x1="42.50" y1="900.60" x2="49.50" y2="893.60" stroke="#00a800" stroke-width="1.1" />
<line x1="52.50" y1="900.60" x2="59.50" y2="893.60" stroke="#00a800" stroke-width="1.1" />
<line x1="62.50" y1="900.60" x2="69.50" y2="893.60" stroke="#00a800" stroke-width="1.1" />
<line x1="72.50" y1="900.60" x2="79.50" y2="893.60" stroke="#00a800" stroke-width="1.1" />
<line x1="82.50" y1="900.60" x2="89.50" y2="893.60" stroke="#00a800" stroke-width="1.1" />
<line x1="92.50" y1="900.60" x2="99.50" y2="893.60" stroke="#00a800" stroke-width="1.1" />
<line x1="102.50" y1="900.60" x2="109.50" y2="893.60" stroke="#00a800" stroke-width="1.1" />
<line x1="112.50" y1="900.60" x2="119.50" y2="893.60" stroke="#00a800" stroke-width="1.1" />
<line x1="122.50" y1="900.60" x2="129.50" y2="893.60" stroke="#00a800" stroke-width="1.1" />
<line x1="132.50" y1="900.60" x2="139.50" y2="893.60" stroke="#00a800" stroke-width="1.1" />
<line x1="142.50" y1="900.60" x2="149.50" y2="893.60" stroke="#00a800" stroke-width="1.1" />
<line x1="152.50" y1="900.60" x2="159.50" y2="893.60" stroke="#00a800" stroke-width="1.1" />
<line x1="162.50" y1="900.60" x2="169.50" y2="893.60" stroke="#00a800" stroke-width="1.1" />
<line x1="172.50" y1="900.60" x2="179.50" y2="893.60" stroke="#00a800" stroke-width="1.1" />
<line x1="182.50" y1="900.60" x2="189.50" y2="893.60" stroke="#00a800" stroke-width="1.1" />
<line x1="192.50" y1="900.60" x2="199.50" y2="893.60" stroke="#00a800" stroke-width="1.1" />
<line x1="202.50" y1="900.60" x2="209.50" y2="893.60" stroke="#00a800" stroke-width="1.1" />
<line x1="212.50" y1="900.60" x2="219.50" y2="893.60" stroke="#00a800" stroke-width="1.1" />
<line x1="222.50" y1="900.60" x2="229.50" y2="893.60" stroke="#00a800" stroke-width="1.1" />
<line x1="232.50" y1="900.60" x2="239.50" y2="893.60" stroke="#00a800" stroke-width="1.1" />
<line x1="242.50" y1="900.60" x2="249.50" y2="893.60" stroke="#00a800" stroke-width="1.1" />
<line x1="252.50" y1="900.60" x2="259.50" y2="893.60" stroke="#00a800" stroke-width="1.1" />
<line x1="262.50" y1="900.60" x2="269.50" y2="893.60" stroke="#00a800" stroke-width="1.1" />
<line x1="272.50" y1="900.60" x2="279.50" y2="893.60" stroke="#00a800" stroke-width="1.1" />
<line x1="282.50" y1="900.60" x2="289.50" y2="893.60" stroke="#00a800" stroke-width="1.1" />
<line x1="292.50" y1="900.60" x2="299.50" y2="893.60" stroke="#00a800" stroke-width="1.1" />
<line x1="302.50" y1="900.60" x2="309.50" y2="893.60" stroke="#00a800" stroke-width="1.1" />
<line x1="312.50" y1="900.60" x2="319.50" y2="893.60" stroke="#00a800" stroke-width="1.1" />
<line x1="322.50" y1="900.60" x2="329.50" y2="893.60" stroke="#00a800" stroke-width="1.1" />
<line x1="332.50" y1="900.60" x2="339.50" y2="893.60" stroke="#00a800" stroke-width="1.1" />
<line x1="342.50" y1="900.60" x2="349.50" y2="893.60" stroke="#00a800" stroke-width="1.1" />
<line x1="352.50" y1="900.60" x2="359.50" y2="893.60" stroke="#00a800" stroke-width="1.1" />
<line x1="362.50" y1="900.60" x2="369.50" y2="893.60" stroke="#00a800" stroke-width="1.1" />
<line x1="372.50" y1="900.60" x2="379.50" y2="893.60" stroke="#00a800" stroke-width="1.1" />
<line x1="382.50" y1="900.60" x2="389.50" y2="893.60" stroke="#00a800" stroke-width="1.1" />
<line x1="392.50" y1="900.60" x2="399.50" y2="893.60" stroke="#00a800" stroke-width="1.1" />
<line x1="402.50" y1="900.60" x2="409.50" y2="893.60" stroke="#00a800" stroke-width="1.1" />
<line x1="412.50" y1="900.60" x2="419.50" y2="893.60" stroke="#00a800" stroke-width="1.1" />
<line x1="422.50" y1="900.60" x2="429.50" y2="893.60" stroke="#00a800" stroke-width="1.1" />
<line x1="432.50" y1="900.60" x2="439.50" y2="893.60" stroke="#00a800" stroke-width="1.1" />
<line x1="442.50" y1="900.60" x2="449.50" y2="893.60" stroke="#00a800" stroke-width="1.1" />
<line x1="452.50" y1="900.60" x2="459.50" y2="893.60" stroke="#00a800" stroke-width="1.1" />
<line x1="462.50" y1="900.60" x2="469.50" y2="893.60" stroke="#00a800" stroke-width="1.1" />
<line x1="472.50" y1="900.60" x2="479.50" y2="893.60" stroke="#00a800" stroke-width="1.1" />
<line x1="482.50" y1="900.60" x2="489.50" y2="893.60" stroke="#00a800" stroke-width="1.1" />
<line x1="492.50" y1="900.60" x2="499.50" y2="893.60" stroke="#00a800" stroke-width="1.1" />
<line x1="502.50" y1="900.60" x2="509.50" y2="893.60" stroke="#00a800" stroke-width="1.1" />
<line x1="512.50" y1="900.60" x2="519.50" y2="893.60" stroke="#00a800" stroke-width="1.1" />
<line x1="522.50" y1="900.60" x2="529.50" y2="893.60" stroke="#00a800" stroke-width="1.1" />
<line x1="532.50" y1="900.60" x2="539.50" y2="893.60" stroke="#00a800" stroke-width="1.1" />
<line x1="542.50" y1="900.60" x2="549.50" y2="893.60" stroke="#00a800" stroke-width="1.1" />
<line x1="552.50" y1="900.60" x2="559.50" y2="893.60" stroke="#00a800" stroke-width="1.1" />
<line x1="562.50" y1="900.60" x2="569.50" y2="893.60" stroke="#00a800" stroke-width="1.1" />
<line x1="572.50" y1="900.60" x2="579.50" y2="893.60" stroke="#00a800" stroke-width="1.1" />
<line x1="582.50" y1="900.60" x2="589.50" y2="893.60" stroke="#00a800" stroke-width="1.1" />
<line x1="592.50" y1="900.60" x2="599.50" y2="893.60" stroke="#00a800" stroke-width="1.1" />
<line x1="602.50" y1="900.60" x2="609.50" y2="893.60" stroke="#00a800" stroke-width="1.1" />
<line x1="612.50" y1="900.60" x2="619.50" y2="893.60" stroke="#00a800" stroke-width="1.1" />
<line x1="622.50" y1="900.60" x2="629.50" y2="893.60" stroke="#00a800" stroke-width="1.1" />
<line x1="632.50" y1="900.60" x2="639.50" y2="893.60" stroke="#00a800" stroke-width="1.1" />
<line x1="642.50" y1="900.60" x2="649.50" y2="893.60" stroke="#00a800" stroke-width="1.1" />
<line x1="652.50" y1="900.60" x2="659.50" y2="893.60" stroke="#00a800" stroke-width="1.1" />
<line x1="665.00" y1="893.60" x2="672.00" y2="900.60" stroke="#f00000" stroke-width="1.1" />
<line x1="675.00" y1="893.60" x2="682.00" y2="900.60" stroke="#f00000" stroke-width="1.1" />
<line x1="685.00" y1="893.60" x2="692.00" y2="900.60" stroke="#f00000" stroke-width="1.1" />
<line x1="695.00" y1="893.60" x2="702.00" y2="900.60" stroke="#f00000" stroke-width="1.1" />
<line x1="705.00" y1="893.60" x2="712.00" y2="900.60" stroke="#f00000" stroke-width="1.1" />
<line x1="715.00" y1="893.60" x2="722.00" y2="900.60" stroke="#f00000" stroke-width="1.1" />
<line x1="725.00" y1="893.60" x2="732.00" y2="900.60" stroke="#f00000" stroke-width="1.1" />
<line x1="735.00" y1="893.60" x2="742.00" y2="900.60" stroke="#f00000" stroke-width="1.1" />
<line x1="745.00" y1="893.60" x2="752.00" y2="900.60" stroke="#f00000" stroke-width="1.1" />
<line x1="755.00" y1="893.60" x2="762.00" y2="900.60" stroke="#f00000" stroke-width="1.1" />
<line x1="765.00" y1="893.60" x2="772.00" y2="900.60" stroke="#f00000" stroke-width="1.1" />
<line x1="772.50" y1="900.60" x2="779.50" y2="893.60" stroke="#00a800" stroke-width="1.1" />
<line x1="782.50" y1="900.60" x2="789.50" y2="893.60" stroke="#00a800" stroke-width="1.1" />
<line x1="792.50" y1="900.60" x2="799.50" y2="893.60" stroke="#00a800" stroke-width="1.1" />
<line x1="802.50" y1="900.60" x2="809.50" y2="893.60" stroke="#00a800" stroke-width="1.1" />
<line x1="812.50" y1="900.60" x2="819.50" y2="893.60" stroke="#00a800" stroke-width="1.1" />
<line x1="822.50" y1="900.60" x2="829.50" y2="893.60" stroke="#00a800" stroke-width="1.1" />
<line x1="832.50" y1="900.60" x2="839.50" y2="893.60" stroke="#00a800" stroke-width="1.1" />
<line x1="842.50" y1="900.60" x2="849.50" y2="893.60" stroke="#00a800" stroke-width="1.1" />
<line x1="852.50" y1="900.60" x2="859.50" y2="893.60" stroke="#00a800" stroke-width="1.1" />
<line x1="862.50" y1="900.60" x2="869.50" y2="893.60" stroke="#00a800" stroke-width="1.1" />
<line x1="872.50" y1="900.60" x2="879.50" y2="893.60" stroke="#00a800" stroke-width="1.1" />
<line x1="882.50" y1="900.60" x2="889.50" y2="893.60" stroke="#00a800" stroke-width="1.1" />
<line x1="892.50" y1="900.60" x2="899.50" y2="893.60" stroke="#00a800" stroke-width="1.1" />
<line x1="902.50" y1="900.60" x2="909.50" y2="893.60" stroke="#00a800" stroke-width="1.1" />
<line x1="912.50" y1="900.60" x2="919.50" y2="893.60" stroke="#00a800" stroke-width="1.1" />
<line x1="922.50" y1="900.60" x2="929.50" y2="893.60" stroke="#00a800" stroke-width="1.1" />
<line x1="932.50" y1="900.60" x2="939.50" y2="893.60" stroke="#00a800" stroke-width="1.1" />
<line x1="942.50" y1="900.60" x2="949.50" y2="893.60" stroke="#00a800" stroke-width="1.1" />
<line x1="952.50" y1="900.60" x2="959.50" y2="893.60" stroke="#00a800" stroke-width="1.1" />
<line x1="962.50" y1="900.60" x2="969.50" y2="893.60" stroke="#00a800" stroke-width="1.1" />
<line x1="972.50" y1="900.60" x2="979.50" y2="893.60" stroke="#00a800" stroke-width="1.1" />
<line x1="982.50" y1="900.60" x2="989.50" y2="893.60" stroke="#00a800" stroke-width="1.1" />
<line x1="992.50" y1="900.60" x2="999.50" y2="893.60" stroke="#00a800" stroke-width="1.1" />
<line x1="1002.50" y1="900.60" x2="1009.50" y2="893.60" stroke="#00a800" stroke-width="1.1" />
<line x1="1012.50" y1="900.60" x2="1019.50" y2="893.60" stroke="#00a800" stroke-width="1.1" />
<line x1="1022.50" y1="900.60" x2="1029.50" y2="893.60" stroke="#00a800" stroke-width="1.1" />
<line x1="1032.50" y1="900.60" x2="1039.50" y2="893.60" stroke="#00a800" stroke-width="1.1" />
<line x1="1042.50" y1="900.60" x2="1049.50" y2="893.60" stroke="#00a800" stroke-width="1.1" />
<line x1="1052.50" y1="900.60" x2="1059.50" y2="893.60" stroke="#00a800" stroke-width="1.1" />
<line x1="1062.50" y1="900.60" x2="1069.50" y2="893.60" stroke="#00a800" stroke-width="1.1" />
<line x1="1072.50" y1="900.60" x2="1079.50" y2="893.60" stroke="#00a800" stroke-width="1.1" />
<line x1="1082.50" y1="900.60" x2="1089.50" y2="893.60" stroke="#00a800" stroke-width="1.1" />
<line x1="1092.50" y1="900.60" x2="1099.50" y2="893.60" stroke="#00a800" stroke-width="1.1" />
<line x1="1102.50" y1="900.60" x2="1109.50" y2="893.60" stroke="#00a800" stroke-width="1.1" />
<line x1="1112.50" y1="900.60" x2="1119.50" y2="893.60" stroke="#00a800" stroke-width="1.1" />
<line x1="1122.50" y1="900.60" x2="1129.50" y2="893.60" stroke="#00a800" stroke-width="1.1" />
<line x1="1132.50" y1="900.60" x2="1139.50" y2="893.60" stroke="#00a800" stroke-width="1.1" />
<line x1="1142.50" y1="900.60" x2="1149.50" y2="893.60" stroke="#00a800" stroke-width="1.1" />
<line x1="1152.50" y1="900.60" x2="1159.50" y2="893.60" stroke="#00a800" stroke-width="1.1" />
<line x1="1162.50" y1="900.60" x2="1169.50" y2="893.60" stroke="#00a800" stroke-width="1.1" />
<line x1="1172.50" y1="900.60" x2="1179.50" y2="893.60" stroke="#00a800" stroke-width="1.1" />
<line x1="1182.50" y1="900.60" x2="1189.50" y2="893.60" stroke="#00a800" stroke-width="1.1" />
<line x1="1192.50" y1="900.60" x2="1199.50" y2="893.60" stroke="#00a800" stroke-width="1.1" />
<line x1="1202.50" y1="900.60" x2="1209.50" y2="893.60" stroke="#00a800" stroke-width="1.1" />
<line x1="1212.50" y1="900.60" x2="1219.50" y2="893.60" stroke="#00a800" stroke-width="1.1" />
<line x1="1222.50" y1="900.60" x2="1229.50" y2="893.60" stroke="#00a800" stroke-width="1.1" />
<line x1="1232.50" y1="900.60" x2="1239.50" y2="893.60" stroke="#00a800" stroke-width="1.1" />
<line x1="1242.50" y1="900.60" x2="1249.50" y2="893.60" stroke="#00a800" stroke-width="1.1" />
<line x1="1252.50" y1="900.60" x2="1259.50" y2="893.60" stroke="#00a800" stroke-width="1.1" />
<line x1="1262.50" y1="900.60" x2="1269.50" y2="893.60" stroke="#00a800" stroke-width="1.1" />
<line x1="1272.50" y1="900.60" x2="1279.50" y2="893.60" stroke="#00a800" stroke-width="1.1" />
<line x1="1282.50" y1="900.60" x2="1289.50" y2="893.60" stroke="#00a800" stroke-width="1.1" />
<line x1="1292.50" y1="900.60" x2="1299.50" y2="893.60" stroke="#00a800" stroke-width="1.1" />
<line x1="1302.50" y1="900.60" x2="1309.50" y2="893.60" stroke="#00a800" stroke-width="1.1" />
<line x1="1312.50" y1="900.60" x2="1319.50" y2="893.60" stroke="#00a800" stroke-width="1.1" />
<line x1="1322.50" y1="900.60" x2="1329.50" y2="893.60" stroke="#00a800" stroke-width="1.1" />
<line x1="1332.50" y1="900.60" x2="1339.50" y2="893.60" stroke="#00a800" stroke-width="1.1" />
<line x1="1342.50" y1="900.60" x2="1349.50" y2="893.60" stroke="#00a800" stroke-width="1.1" />
<line x1="1352.50" y1="900.60" x2="1359.50" y2="893.60" stroke="#00a800" stroke-width="1.1" />
<line x1="1362.50" y1="900.60" x2="1369.50" y2="893.60" stroke="#00a800" stroke-width="1.1" />
<line x1="1372.50" y1="900.60" x2="1379.50" y2="893.60" stroke="#00a800" stroke-width="1.1" />
<line x1="1382.50" y1="900.60" x2="1389.50" y2="893.60" stroke="#00a800" stroke-width="1.1" />
<line x1="1392.50" y1="900.60" x2="1399.50" y2="893.60" stroke="#00a800" stroke-width="1.1" />
<line x1="1402.50" y1="900.60" x2="1409.50" y2="893.60" stroke="#00a800" stroke-width="1.1" />
<line x1="1412.50" y1="900.60" x2="1419.50" y2="893.60" stroke="#00a800" stroke-width="1.1" />
<line x1="1422.50" y1="900.60" x2="1429.50" y2="893.60" stroke="#00a800" stroke-width="1.1" />
<line x1="1432.50" y1="900.60" x2="1439.50" y2="893.60" stroke="#00a800" stroke-width="1.1" />
<line x1="1442.50" y1="900.60" x2="1449.50" y2="893.60" stroke="#00a800" stroke-width="1.1" />
<line x1="1452.50" y1="900.60" x2="1459.50" y2="893.60" stroke="#00a800" stroke-width="1.1" />
<line x1="1462.50" y1="900.60" x2="1469.50" y2="893.60" stroke="#00a800" stroke-width="1.1" />
<line x1="1472.50" y1="900.60" x2="1479.50" y2="893.60" stroke="#00a800" stroke-width="1.1" />
<line x1="1482.50" y1="900.60" x2="1489.50" y2="893.60" stroke="#00a800" stroke-width="1.1" />
<line x1="1492.50" y1="900.60" x2="1499.50" y2="893.60" stroke="#00a800" stroke-width="1.1" />
<line x1="1502.50" y1="900.60" x2="1509.50" y2="893.60" stroke="#00a800" stroke-width="1.1" />
<line x1="1512.50" y1="900.60" x2="1519.50" y2="893.60" stroke="#00a800" stroke-width="1.1" />
<line x1="1522.50" y1="900.60" x2="1529.50" y2="893.60" stroke="#00a800" stroke-width="1.1" />
<line x1="1535.00" y1="893.60" x2="1542.00" y2="900.60" stroke="#f00000" stroke-width="1.1" />
<line x1="1545.00" y1="893.60" x2="1552.00" y2="900.60" stroke="#f00000" stroke-width="1.1" />
<line x1="1555.00" y1="893.60" x2="1562.00" y2="900.60" stroke="#f00000" stroke-width="1.1" />
<line x1="1565.00" y1="893.60" x2="1572.00" y2="900.60" stroke="#f00000" stroke-width="1.1" />
<line x1="1575.00" y1="893.60" x2="1582.00" y2="900.60" stroke="#f00000" stroke-width="1.1" />
<line x1="1585.00" y1="893.60" x2="1592.00" y2="900.60" stroke="#f00000" stroke-width="1.1" />
<line x1="1595.00" y1="893.60" x2="1602.00" y2="900.60" stroke="#f00000" stroke-width="1.1" />
<rect x="343.00" y="893.20" width="7.00" height="1.60" fill="#0000e0" />
<rect x="707.50" y="893.20" width="7.50" height="1.60" fill="#0000e0" />
<rect x="1558.00" y="893.20" width="7.00" height="1.60" fill="#0000e0" />
<path d="M1582.2,744.5 l8.6,10.2 h-5 v11.2 h-7.2 v-11.2 h-5 z" fill="#009000"/>
<line x1="1381.50" y1="134.90" x2="1381.50" y2="185.80" stroke="#a6dcee" stroke-width="1" class="c" stroke-dasharray="4 4"/>
<line x1="1584.50" y1="134.90" x2="1584.50" y2="185.80" stroke="#1fc01f" stroke-width="1" class="c" stroke-dasharray="4 4"/>
<line x1="1381.50" y1="219.90" x2="1381.50" y2="298.40" stroke="#a6dcee" stroke-width="1" class="c" stroke-dasharray="4 4"/>
<line x1="1584.50" y1="219.90" x2="1584.50" y2="298.40" stroke="#1fc01f" stroke-width="1" class="c" stroke-dasharray="4 4"/>
<line x1="1381.50" y1="331.60" x2="1381.50" y2="555.00" stroke="#a6dcee" stroke-width="1" class="c" stroke-dasharray="4 4"/>
<line x1="1584.50" y1="331.60" x2="1584.50" y2="555.00" stroke="#1fc01f" stroke-width="1" class="c" stroke-dasharray="4 4"/>
<line x1="1381.50" y1="587.80" x2="1381.50" y2="898.50" stroke="#a6dcee" stroke-width="1" class="c" stroke-dasharray="4 4"/>
<line x1="1584.50" y1="587.80" x2="1584.50" y2="892.50" stroke="#1fc01f" stroke-width="1" class="c" stroke-dasharray="4 4"/>
<line x1="1856.70" y1="135.90" x2="1856.70" y2="185.30" stroke="#ffffff" stroke-width="1.7" />
<line x1="1856.50" y1="149.30" x2="1861.30" y2="149.30" stroke="#ffffff" stroke-width="1.3" />
<line x1="1856.50" y1="172.00" x2="1861.30" y2="172.00" stroke="#ffffff" stroke-width="1.3" />
<line x1="1856.50" y1="138.80" x2="1867.30" y2="138.80" stroke="#ffffff" stroke-width="1.3" />
<line x1="1856.50" y1="160.60" x2="1867.30" y2="160.60" stroke="#ffffff" stroke-width="1.3" />
<line x1="1856.50" y1="181.80" x2="1867.30" y2="181.80" stroke="#ffffff" stroke-width="1.3" />
<text x="1914.60" y="167.10" font-size="15.6" fill="#ffffff" text-anchor="end" >0</text>
<line x1="1856.70" y1="220.90" x2="1856.70" y2="297.90" stroke="#ffffff" stroke-width="1.7" />
<line x1="1856.50" y1="226.50" x2="1861.30" y2="226.50" stroke="#ffffff" stroke-width="1.3" />
<line x1="1856.50" y1="248.20" x2="1861.30" y2="248.20" stroke="#ffffff" stroke-width="1.3" />
<line x1="1856.50" y1="270.50" x2="1861.30" y2="270.50" stroke="#ffffff" stroke-width="1.3" />
<line x1="1856.50" y1="292.50" x2="1861.30" y2="292.50" stroke="#ffffff" stroke-width="1.3" />
<line x1="1856.50" y1="237.10" x2="1867.30" y2="237.10" stroke="#ffffff" stroke-width="1.3" />
<line x1="1856.50" y1="259.30" x2="1867.30" y2="259.30" stroke="#ffffff" stroke-width="1.3" />
<line x1="1856.50" y1="281.80" x2="1867.30" y2="281.80" stroke="#ffffff" stroke-width="1.3" />
<text x="1914.60" y="243.90" font-size="15.6" fill="#ffffff" text-anchor="end" >1000</text>
<text x="1914.60" y="266.10" font-size="15.6" fill="#ffffff" text-anchor="end" >0</text>
<text x="1914.60" y="288.60" font-size="15.6" fill="#ffffff" text-anchor="end" >-1000</text>
<line x1="1856.70" y1="332.60" x2="1856.70" y2="554.50" stroke="#ffffff" stroke-width="1.7" />
<line x1="1856.50" y1="341.21" x2="1861.30" y2="341.21" stroke="#ffffff" stroke-width="1.3" />
<line x1="1856.50" y1="359.84" x2="1861.30" y2="359.84" stroke="#ffffff" stroke-width="1.3" />
<line x1="1856.50" y1="378.46" x2="1861.30" y2="378.46" stroke="#ffffff" stroke-width="1.3" />
<line x1="1856.50" y1="397.09" x2="1861.30" y2="397.09" stroke="#ffffff" stroke-width="1.3" />
<line x1="1856.50" y1="415.71" x2="1861.30" y2="415.71" stroke="#ffffff" stroke-width="1.3" />
<line x1="1856.50" y1="434.34" x2="1861.30" y2="434.34" stroke="#ffffff" stroke-width="1.3" />
<line x1="1856.50" y1="452.96" x2="1861.30" y2="452.96" stroke="#ffffff" stroke-width="1.3" />
<line x1="1856.50" y1="471.59" x2="1861.30" y2="471.59" stroke="#ffffff" stroke-width="1.3" />
<line x1="1856.50" y1="490.21" x2="1861.30" y2="490.21" stroke="#ffffff" stroke-width="1.3" />
<line x1="1856.50" y1="508.84" x2="1861.30" y2="508.84" stroke="#ffffff" stroke-width="1.3" />
<line x1="1856.50" y1="527.46" x2="1861.30" y2="527.46" stroke="#ffffff" stroke-width="1.3" />
<line x1="1856.50" y1="546.09" x2="1861.30" y2="546.09" stroke="#ffffff" stroke-width="1.3" />
<line x1="1856.50" y1="350.52" x2="1867.30" y2="350.52" stroke="#ffffff" stroke-width="1.3" />
<line x1="1856.50" y1="369.15" x2="1867.30" y2="369.15" stroke="#ffffff" stroke-width="1.3" />
<line x1="1856.50" y1="387.77" x2="1867.30" y2="387.77" stroke="#ffffff" stroke-width="1.3" />
<line x1="1856.50" y1="406.40" x2="1867.30" y2="406.40" stroke="#ffffff" stroke-width="1.3" />
<line x1="1856.50" y1="425.02" x2="1867.30" y2="425.02" stroke="#ffffff" stroke-width="1.3" />
<line x1="1856.50" y1="443.65" x2="1867.30" y2="443.65" stroke="#ffffff" stroke-width="1.3" />
<line x1="1856.50" y1="462.27" x2="1867.30" y2="462.27" stroke="#ffffff" stroke-width="1.3" />
<line x1="1856.50" y1="480.90" x2="1867.30" y2="480.90" stroke="#ffffff" stroke-width="1.3" />
<line x1="1856.50" y1="499.52" x2="1867.30" y2="499.52" stroke="#ffffff" stroke-width="1.3" />
<line x1="1856.50" y1="518.15" x2="1867.30" y2="518.15" stroke="#ffffff" stroke-width="1.3" />
<line x1="1856.50" y1="536.77" x2="1867.30" y2="536.77" stroke="#ffffff" stroke-width="1.3" />
<text x="1914.60" y="357.52" font-size="15.6" fill="#ffffff" text-anchor="end" >30</text>
<text x="1914.60" y="376.15" font-size="15.6" fill="#ffffff" text-anchor="end" >20</text>
<text x="1914.60" y="394.77" font-size="15.6" fill="#ffffff" text-anchor="end" >10</text>
<text x="1914.60" y="413.40" font-size="15.6" fill="#ffffff" text-anchor="end" >0</text>
<text x="1914.60" y="432.02" font-size="15.6" fill="#ffffff" text-anchor="end" >-10</text>
<text x="1914.60" y="450.65" font-size="15.6" fill="#ffffff" text-anchor="end" >-20</text>
<text x="1914.60" y="469.27" font-size="15.6" fill="#ffffff" text-anchor="end" >-30</text>
<text x="1914.60" y="487.90" font-size="15.6" fill="#ffffff" text-anchor="end" >-40</text>
<text x="1914.60" y="506.52" font-size="15.6" fill="#ffffff" text-anchor="end" >-50</text>
<text x="1914.60" y="525.15" font-size="15.6" fill="#ffffff" text-anchor="end" >-60</text>
<text x="1914.60" y="543.77" font-size="15.6" fill="#ffffff" text-anchor="end" >-70</text>
<line x1="1856.70" y1="588.80" x2="1856.70" y2="898.00" stroke="#ffffff" stroke-width="1.7" />
<line x1="1856.50" y1="885.70" x2="1861.30" y2="885.70" stroke="#ffffff" stroke-width="1.3" />
<line x1="1856.50" y1="875.52" x2="1861.30" y2="875.52" stroke="#ffffff" stroke-width="1.3" />
<line x1="1856.50" y1="865.35" x2="1861.30" y2="865.35" stroke="#ffffff" stroke-width="1.3" />
<line x1="1856.50" y1="855.17" x2="1861.30" y2="855.17" stroke="#ffffff" stroke-width="1.3" />
<line x1="1856.50" y1="834.83" x2="1861.30" y2="834.83" stroke="#ffffff" stroke-width="1.3" />
<line x1="1856.50" y1="824.65" x2="1861.30" y2="824.65" stroke="#ffffff" stroke-width="1.3" />
<line x1="1856.50" y1="814.48" x2="1861.30" y2="814.48" stroke="#ffffff" stroke-width="1.3" />
<line x1="1856.50" y1="804.30" x2="1861.30" y2="804.30" stroke="#ffffff" stroke-width="1.3" />
<line x1="1856.50" y1="783.95" x2="1861.30" y2="783.95" stroke="#ffffff" stroke-width="1.3" />
<line x1="1856.50" y1="773.77" x2="1861.30" y2="773.77" stroke="#ffffff" stroke-width="1.3" />
<line x1="1856.50" y1="763.60" x2="1861.30" y2="763.60" stroke="#ffffff" stroke-width="1.3" />
<line x1="1856.50" y1="753.42" x2="1861.30" y2="753.42" stroke="#ffffff" stroke-width="1.3" />
<line x1="1856.50" y1="733.08" x2="1861.30" y2="733.08" stroke="#ffffff" stroke-width="1.3" />
<line x1="1856.50" y1="722.90" x2="1861.30" y2="722.90" stroke="#ffffff" stroke-width="1.3" />
<line x1="1856.50" y1="712.73" x2="1861.30" y2="712.73" stroke="#ffffff" stroke-width="1.3" />
<line x1="1856.50" y1="702.55" x2="1861.30" y2="702.55" stroke="#ffffff" stroke-width="1.3" />
<line x1="1856.50" y1="682.20" x2="1861.30" y2="682.20" stroke="#ffffff" stroke-width="1.3" />
<line x1="1856.50" y1="672.02" x2="1861.30" y2="672.02" stroke="#ffffff" stroke-width="1.3" />
<line x1="1856.50" y1="661.85" x2="1861.30" y2="661.85" stroke="#ffffff" stroke-width="1.3" />
<line x1="1856.50" y1="651.67" x2="1861.30" y2="651.67" stroke="#ffffff" stroke-width="1.3" />
<line x1="1856.50" y1="631.33" x2="1861.30" y2="631.33" stroke="#ffffff" stroke-width="1.3" />
<line x1="1856.50" y1="621.15" x2="1861.30" y2="621.15" stroke="#ffffff" stroke-width="1.3" />
<line x1="1856.50" y1="610.98" x2="1861.30" y2="610.98" stroke="#ffffff" stroke-width="1.3" />
<line x1="1856.50" y1="600.80" x2="1861.30" y2="600.80" stroke="#ffffff" stroke-width="1.3" />
<line x1="1856.50" y1="590.62" x2="1867.30" y2="590.62" stroke="#ffffff" stroke-width="1.3" />
<line x1="1856.50" y1="641.50" x2="1867.30" y2="641.50" stroke="#ffffff" stroke-width="1.3" />
<line x1="1856.50" y1="692.38" x2="1867.30" y2="692.38" stroke="#ffffff" stroke-width="1.3" />
<line x1="1856.50" y1="743.25" x2="1867.30" y2="743.25" stroke="#ffffff" stroke-width="1.3" />
<line x1="1856.50" y1="794.12" x2="1867.30" y2="794.12" stroke="#ffffff" stroke-width="1.3" />
<line x1="1856.50" y1="845.00" x2="1867.30" y2="845.00" stroke="#ffffff" stroke-width="1.3" />
<text x="1914.60" y="648.50" font-size="15.6" fill="#ffffff" text-anchor="end" >4300</text>
<text x="1914.60" y="750.25" font-size="15.6" fill="#ffffff" text-anchor="end" >4200</text>
<text x="1914.60" y="801.12" font-size="15.6" fill="#ffffff" text-anchor="end" >4150</text>
<text x="1914.60" y="852.00" font-size="15.6" fill="#ffffff" text-anchor="end" >4100</text>
<text x="1914.60" y="699.38" font-size="15.6" fill="#ffffff" text-anchor="end" >4250</text>
<rect x="1858.00" y="688.60" width="62.00" height="21.60" fill="#000" />
<rect x="1861.3" y="688.8" width="60" height="21.4" fill="#000" stroke="#fff" stroke-width="1.3"/>
<text x="1864.30" y="704.70" font-size="13.4" fill="#22e022" textLength="55.0" lengthAdjust="spacingAndGlyphs" >4241.530</text>
<text x="1837.50" y="739.30" font-size="12.5" fill="#ff0000" textLength="19.0" lengthAdjust="spacingAndGlyphs" font-style="italic">&lt; 4</text>
<rect x="1856.60" y="725.00" width="64.00" height="20.00" fill="#000" />
<line x1="1856.70" y1="725.00" x2="1856.70" y2="745.00" stroke="#ffffff" stroke-width="1.7" />
<line x1="1856.50" y1="743.25" x2="1867.30" y2="743.25" stroke="#ffffff" stroke-width="1.3" />
<line x1="1856.50" y1="733.08" x2="1861.30" y2="733.08" stroke="#ffffff" stroke-width="1.3" />
<text x="1914.60" y="750.25" font-size="15.6" fill="#ffffff" text-anchor="end" >4200</text>
<line x1="37.00" y1="901.40" x2="1857.00" y2="901.40" stroke="#ffffff" stroke-width="1.3" />
<line x1="37.00" y1="922.00" x2="1857.00" y2="922.00" stroke="#ffffff" stroke-width="1.3" />
<line x1="45.50" y1="901.50" x2="45.50" y2="908.30" stroke="#ffffff" stroke-width="1.5" />
<line x1="61.04" y1="901.50" x2="61.04" y2="908.30" stroke="#ffffff" stroke-width="1.5" />
<line x1="76.58" y1="901.50" x2="76.58" y2="908.30" stroke="#ffffff" stroke-width="1.5" />
<line x1="92.13" y1="901.50" x2="92.13" y2="908.30" stroke="#ffffff" stroke-width="1.5" />
<line x1="107.67" y1="901.50" x2="107.67" y2="908.30" stroke="#ffffff" stroke-width="1.5" />
<line x1="123.21" y1="901.50" x2="123.21" y2="923.40" stroke="#ffffff" stroke-width="1.5" />
<text x="125.41" y="916.90" font-size="15.6" fill="#ffffff" >2</text>
<line x1="138.75" y1="901.50" x2="138.75" y2="908.30" stroke="#ffffff" stroke-width="1.5" />
<line x1="154.30" y1="901.50" x2="154.30" y2="908.30" stroke="#ffffff" stroke-width="1.5" />
<line x1="169.84" y1="901.50" x2="169.84" y2="908.30" stroke="#ffffff" stroke-width="1.5" />
<line x1="185.38" y1="901.50" x2="185.38" y2="908.30" stroke="#ffffff" stroke-width="1.5" />
<line x1="200.92" y1="901.50" x2="200.92" y2="908.30" stroke="#ffffff" stroke-width="1.5" />
<line x1="216.47" y1="901.50" x2="216.47" y2="908.30" stroke="#ffffff" stroke-width="1.5" />
<line x1="232.01" y1="901.50" x2="232.01" y2="923.40" stroke="#ffffff" stroke-width="1.5" />
<text x="234.21" y="916.90" font-size="15.6" fill="#ffffff" >3</text>
<line x1="247.55" y1="901.50" x2="247.55" y2="908.30" stroke="#ffffff" stroke-width="1.5" />
<line x1="263.09" y1="901.50" x2="263.09" y2="908.30" stroke="#ffffff" stroke-width="1.5" />
<line x1="278.64" y1="901.50" x2="278.64" y2="908.30" stroke="#ffffff" stroke-width="1.5" />
<line x1="294.18" y1="901.50" x2="294.18" y2="908.30" stroke="#ffffff" stroke-width="1.5" />
<line x1="309.72" y1="901.50" x2="309.72" y2="908.30" stroke="#ffffff" stroke-width="1.5" />
<line x1="325.26" y1="901.50" x2="325.26" y2="908.30" stroke="#ffffff" stroke-width="1.5" />
<line x1="340.81" y1="901.50" x2="340.81" y2="923.40" stroke="#ffffff" stroke-width="1.5" />
<text x="343.01" y="916.90" font-size="15.6" fill="#ffffff" >4</text>
<line x1="356.35" y1="901.50" x2="356.35" y2="908.30" stroke="#ffffff" stroke-width="1.5" />
<line x1="371.89" y1="901.50" x2="371.89" y2="908.30" stroke="#ffffff" stroke-width="1.5" />
<line x1="387.43" y1="901.50" x2="387.43" y2="908.30" stroke="#ffffff" stroke-width="1.5" />
<line x1="402.98" y1="901.50" x2="402.98" y2="908.30" stroke="#ffffff" stroke-width="1.5" />
<line x1="418.52" y1="901.50" x2="418.52" y2="908.30" stroke="#ffffff" stroke-width="1.5" />
<line x1="434.06" y1="901.50" x2="434.06" y2="908.30" stroke="#ffffff" stroke-width="1.5" />
<line x1="449.60" y1="901.50" x2="449.60" y2="923.40" stroke="#ffffff" stroke-width="1.5" />
<text x="451.80" y="916.90" font-size="15.6" fill="#ffffff" >5</text>
<line x1="465.14" y1="901.50" x2="465.14" y2="908.30" stroke="#ffffff" stroke-width="1.5" />
<line x1="480.69" y1="901.50" x2="480.69" y2="908.30" stroke="#ffffff" stroke-width="1.5" />
<line x1="496.23" y1="901.50" x2="496.23" y2="908.30" stroke="#ffffff" stroke-width="1.5" />
<line x1="511.77" y1="901.50" x2="511.77" y2="908.30" stroke="#ffffff" stroke-width="1.5" />
<line x1="527.31" y1="901.50" x2="527.31" y2="908.30" stroke="#ffffff" stroke-width="1.5" />
<line x1="542.86" y1="901.50" x2="542.86" y2="908.30" stroke="#ffffff" stroke-width="1.5" />
<line x1="558.40" y1="901.50" x2="558.40" y2="923.40" stroke="#ffffff" stroke-width="1.5" />
<text x="560.60" y="916.90" font-size="15.6" fill="#ffffff" >8</text>
<line x1="573.94" y1="901.50" x2="573.94" y2="908.30" stroke="#ffffff" stroke-width="1.5" />
<line x1="589.48" y1="901.50" x2="589.48" y2="908.30" stroke="#ffffff" stroke-width="1.5" />
<line x1="605.03" y1="901.50" x2="605.03" y2="908.30" stroke="#ffffff" stroke-width="1.5" />
<line x1="620.57" y1="901.50" x2="620.57" y2="908.30" stroke="#ffffff" stroke-width="1.5" />
<line x1="636.11" y1="901.50" x2="636.11" y2="908.30" stroke="#ffffff" stroke-width="1.5" />
<line x1="651.65" y1="901.50" x2="651.65" y2="908.30" stroke="#ffffff" stroke-width="1.5" />
<line x1="667.20" y1="901.50" x2="667.20" y2="923.40" stroke="#ffffff" stroke-width="1.5" />
<text x="669.40" y="916.90" font-size="15.6" fill="#ffffff" >9</text>
<line x1="682.74" y1="901.50" x2="682.74" y2="908.30" stroke="#ffffff" stroke-width="1.5" />
<line x1="698.28" y1="901.50" x2="698.28" y2="908.30" stroke="#ffffff" stroke-width="1.5" />
<line x1="713.82" y1="901.50" x2="713.82" y2="908.30" stroke="#ffffff" stroke-width="1.5" />
<line x1="729.37" y1="901.50" x2="729.37" y2="908.30" stroke="#ffffff" stroke-width="1.5" />
<line x1="744.91" y1="901.50" x2="744.91" y2="908.30" stroke="#ffffff" stroke-width="1.5" />
<line x1="760.45" y1="901.50" x2="760.45" y2="908.30" stroke="#ffffff" stroke-width="1.5" />
<line x1="775.99" y1="901.50" x2="775.99" y2="923.40" stroke="#ffffff" stroke-width="1.5" />
<text x="778.19" y="916.90" font-size="15.6" fill="#ffffff" >10</text>
<line x1="791.54" y1="901.50" x2="791.54" y2="908.30" stroke="#ffffff" stroke-width="1.5" />
<line x1="807.08" y1="901.50" x2="807.08" y2="908.30" stroke="#ffffff" stroke-width="1.5" />
<line x1="822.62" y1="901.50" x2="822.62" y2="908.30" stroke="#ffffff" stroke-width="1.5" />
<line x1="838.16" y1="901.50" x2="838.16" y2="908.30" stroke="#ffffff" stroke-width="1.5" />
<line x1="853.70" y1="901.50" x2="853.70" y2="908.30" stroke="#ffffff" stroke-width="1.5" />
<line x1="869.25" y1="901.50" x2="869.25" y2="908.30" stroke="#ffffff" stroke-width="1.5" />
<line x1="884.79" y1="901.50" x2="884.79" y2="923.40" stroke="#ffffff" stroke-width="1.5" />
<text x="886.99" y="916.90" font-size="15.6" fill="#ffffff" >11</text>
<line x1="900.33" y1="901.50" x2="900.33" y2="908.30" stroke="#ffffff" stroke-width="1.5" />
<line x1="915.87" y1="901.50" x2="915.87" y2="908.30" stroke="#ffffff" stroke-width="1.5" />
<line x1="931.42" y1="901.50" x2="931.42" y2="908.30" stroke="#ffffff" stroke-width="1.5" />
<line x1="946.96" y1="901.50" x2="946.96" y2="908.30" stroke="#ffffff" stroke-width="1.5" />
<line x1="962.50" y1="901.50" x2="962.50" y2="908.30" stroke="#ffffff" stroke-width="1.5" />
<line x1="978.04" y1="901.50" x2="978.04" y2="908.30" stroke="#ffffff" stroke-width="1.5" />
<line x1="993.59" y1="901.50" x2="993.59" y2="923.40" stroke="#ffffff" stroke-width="1.5" />
<text x="995.79" y="916.90" font-size="15.6" fill="#ffffff" >12</text>
<line x1="1009.13" y1="901.50" x2="1009.13" y2="908.30" stroke="#ffffff" stroke-width="1.5" />
<line x1="1024.67" y1="901.50" x2="1024.67" y2="908.30" stroke="#ffffff" stroke-width="1.5" />
<line x1="1040.21" y1="901.50" x2="1040.21" y2="908.30" stroke="#ffffff" stroke-width="1.5" />
<line x1="1055.76" y1="901.50" x2="1055.76" y2="908.30" stroke="#ffffff" stroke-width="1.5" />
<line x1="1071.30" y1="901.50" x2="1071.30" y2="908.30" stroke="#ffffff" stroke-width="1.5" />
<line x1="1086.84" y1="901.50" x2="1086.84" y2="908.30" stroke="#ffffff" stroke-width="1.5" />
<line x1="1102.38" y1="901.50" x2="1102.38" y2="923.40" stroke="#ffffff" stroke-width="1.5" />
<text x="1104.58" y="916.90" font-size="15.6" fill="#ffffff" >15</text>
<line x1="1117.93" y1="901.50" x2="1117.93" y2="908.30" stroke="#ffffff" stroke-width="1.5" />
<line x1="1133.47" y1="901.50" x2="1133.47" y2="908.30" stroke="#ffffff" stroke-width="1.5" />
<line x1="1149.01" y1="901.50" x2="1149.01" y2="908.30" stroke="#ffffff" stroke-width="1.5" />
<line x1="1164.55" y1="901.50" x2="1164.55" y2="908.30" stroke="#ffffff" stroke-width="1.5" />
<line x1="1180.10" y1="901.50" x2="1180.10" y2="908.30" stroke="#ffffff" stroke-width="1.5" />
<line x1="1195.64" y1="901.50" x2="1195.64" y2="908.30" stroke="#ffffff" stroke-width="1.5" />
<line x1="1211.18" y1="901.50" x2="1211.18" y2="923.40" stroke="#ffffff" stroke-width="1.5" />
<text x="1213.38" y="916.90" font-size="15.6" fill="#ffffff" >16</text>
<line x1="1226.72" y1="901.50" x2="1226.72" y2="908.30" stroke="#ffffff" stroke-width="1.5" />
<line x1="1242.26" y1="901.50" x2="1242.26" y2="908.30" stroke="#ffffff" stroke-width="1.5" />
<line x1="1257.81" y1="901.50" x2="1257.81" y2="908.30" stroke="#ffffff" stroke-width="1.5" />
<line x1="1273.35" y1="901.50" x2="1273.35" y2="908.30" stroke="#ffffff" stroke-width="1.5" />
<line x1="1288.89" y1="901.50" x2="1288.89" y2="908.30" stroke="#ffffff" stroke-width="1.5" />
<line x1="1304.43" y1="901.50" x2="1304.43" y2="908.30" stroke="#ffffff" stroke-width="1.5" />
<line x1="1319.98" y1="901.50" x2="1319.98" y2="923.40" stroke="#ffffff" stroke-width="1.5" />
<text x="1322.18" y="916.90" font-size="15.6" fill="#ffffff" >17</text>
<line x1="1335.52" y1="901.50" x2="1335.52" y2="908.30" stroke="#ffffff" stroke-width="1.5" />
<line x1="1351.06" y1="901.50" x2="1351.06" y2="908.30" stroke="#ffffff" stroke-width="1.5" />
<line x1="1366.60" y1="901.50" x2="1366.60" y2="908.30" stroke="#ffffff" stroke-width="1.5" />
<line x1="1382.15" y1="901.50" x2="1382.15" y2="908.30" stroke="#ffffff" stroke-width="1.5" />
<line x1="1397.69" y1="901.50" x2="1397.69" y2="908.30" stroke="#ffffff" stroke-width="1.5" />
<line x1="1413.23" y1="901.50" x2="1413.23" y2="908.30" stroke="#ffffff" stroke-width="1.5" />
<line x1="1428.77" y1="901.50" x2="1428.77" y2="923.40" stroke="#ffffff" stroke-width="1.5" />
<text x="1430.97" y="916.90" font-size="15.6" fill="#ffffff" >18</text>
<line x1="1444.32" y1="901.50" x2="1444.32" y2="908.30" stroke="#ffffff" stroke-width="1.5" />
<line x1="1459.86" y1="901.50" x2="1459.86" y2="908.30" stroke="#ffffff" stroke-width="1.5" />
<line x1="1475.40" y1="901.50" x2="1475.40" y2="908.30" stroke="#ffffff" stroke-width="1.5" />
<line x1="1490.94" y1="901.50" x2="1490.94" y2="908.30" stroke="#ffffff" stroke-width="1.5" />
<line x1="1506.49" y1="901.50" x2="1506.49" y2="908.30" stroke="#ffffff" stroke-width="1.5" />
<line x1="1522.03" y1="901.50" x2="1522.03" y2="908.30" stroke="#ffffff" stroke-width="1.5" />
<line x1="1537.57" y1="901.50" x2="1537.57" y2="923.40" stroke="#ffffff" stroke-width="1.5" />
<text x="1539.77" y="916.90" font-size="15.6" fill="#ffffff" >19</text>
<line x1="1553.11" y1="901.50" x2="1553.11" y2="908.30" stroke="#ffffff" stroke-width="1.5" />
<line x1="1568.66" y1="901.50" x2="1568.66" y2="908.30" stroke="#ffffff" stroke-width="1.5" />
<line x1="1584.20" y1="901.50" x2="1584.20" y2="908.30" stroke="#ffffff" stroke-width="1.5" />
<line x1="1599.74" y1="901.50" x2="1599.74" y2="908.30" stroke="#ffffff" stroke-width="1.5" />
<line x1="1615.28" y1="901.50" x2="1615.28" y2="908.30" stroke="#ffffff" stroke-width="1.5" />
<line x1="1630.82" y1="901.50" x2="1630.82" y2="908.30" stroke="#ffffff" stroke-width="1.5" />
<line x1="1646.37" y1="901.50" x2="1646.37" y2="908.30" stroke="#ffffff" stroke-width="1.5" />
<line x1="1661.91" y1="901.50" x2="1661.91" y2="908.30" stroke="#ffffff" stroke-width="1.5" />
<line x1="1677.45" y1="901.50" x2="1677.45" y2="908.30" stroke="#ffffff" stroke-width="1.5" />
<line x1="1692.99" y1="901.50" x2="1692.99" y2="908.30" stroke="#ffffff" stroke-width="1.5" />
<line x1="1708.54" y1="901.50" x2="1708.54" y2="908.30" stroke="#ffffff" stroke-width="1.5" />
<line x1="1724.08" y1="901.50" x2="1724.08" y2="908.30" stroke="#ffffff" stroke-width="1.5" />
<line x1="1739.62" y1="901.50" x2="1739.62" y2="908.30" stroke="#ffffff" stroke-width="1.5" />
<line x1="1755.16" y1="901.50" x2="1755.16" y2="923.40" stroke="#ffffff" stroke-width="1.5" />
<text x="1757.36" y="916.90" font-size="15.6" fill="#ffffff" >20</text>
<line x1="1770.71" y1="901.50" x2="1770.71" y2="908.30" stroke="#ffffff" stroke-width="1.5" />
<line x1="1786.25" y1="901.50" x2="1786.25" y2="908.30" stroke="#ffffff" stroke-width="1.5" />
<line x1="1801.79" y1="901.50" x2="1801.79" y2="908.30" stroke="#ffffff" stroke-width="1.5" />
<line x1="1817.33" y1="901.50" x2="1817.33" y2="908.30" stroke="#ffffff" stroke-width="1.5" />
<line x1="1832.88" y1="901.50" x2="1832.88" y2="908.30" stroke="#ffffff" stroke-width="1.5" />
<line x1="1848.42" y1="901.50" x2="1848.42" y2="908.30" stroke="#ffffff" stroke-width="1.5" />
<clipPath id="cpA"><rect x="37" y="922" width="200" height="21"/></clipPath>
<text x="16.40" y="936.80" font-size="15.2" fill="#ffffff" clip-path="url(#cpA)">August</text>
<defs><linearGradient id="gP" x1="0" y1="0" x2="1" y2="1"><stop offset="0" stop-color="#8a2a10"/><stop offset="0.5" stop-color="#e06a1c"/><stop offset="1" stop-color="#9a2412"/></linearGradient><linearGradient id="gDoc" x1="0" y1="0" x2="1" y2="1"><stop offset="0" stop-color="#cfe6f5"/><stop offset="1" stop-color="#8fc3e6"/></linearGradient><linearGradient id="gGreenArr" x1="0" y1="0" x2="1" y2="1"><stop offset="0" stop-color="#7fbf7f"/><stop offset="1" stop-color="#2e7d32"/></linearGradient><linearGradient id="gWin" x1="0" y1="0" x2="0" y2="1"><stop offset="0" stop-color="#f6f6f6"/><stop offset="1" stop-color="#d2d2d2"/></linearGradient><radialGradient id="gLens" cx="0.4" cy="0.35" r="0.7"><stop offset="0" stop-color="#e8f4ff"/><stop offset="1" stop-color="#7fb2e0"/></radialGradient></defs>
<rect x="5.00" y="73.70" width="25.00" height="25.00" fill="url(#gP)" />
<path d="M5,90 C12,80 20,92 30,82" stroke="#f4b27a" stroke-width="1" fill="none" opacity="0.6"/>
<ellipse cx="17.5" cy="86" rx="8.5" ry="8" fill="#4a3a3a" opacity="0.45"/>
<text x="12.30" y="92.30" font-size="17" fill="#ffffff" font-weight="bold">P</text>
<line x1="43.30" y1="66.00" x2="43.30" y2="104.00" stroke="#fbfbfb" stroke-width="1.2" />
<rect x="51" y="66" width="9" height="38" fill="url(#gGrip)"/>
<line x1="60.00" y1="66.00" x2="60.00" y2="104.00" stroke="#8e8e8e" stroke-width="1.1" />
<rect x="54.00" y="83.80" width="2.60" height="2.60" fill="#555" />
<path d="M68.3,75.8 h12.5 l5.7,5.7 v15 h-18.2 z" fill="#fdfdfd" stroke="#8a8a8a" stroke-width="1.4" stroke-linejoin="round"/>
<path d="M71,78.5 h9 l3.8,4 v11.5 h-12.8 z" fill="url(#gDoc)"/>
<path d="M80.8,75.8 v5.7 h5.7" fill="#fff" stroke="#8a8a8a" stroke-width="1.2"/>
<path d="M102,92.8 v-14 q0,-1.2 1.2,-1.2 h6 l2.2,2.4 h6.5 q1.2,0 1.2,1.2 v4" fill="#f4f4f4" stroke="#8a8a8a" stroke-width="1.5" stroke-linejoin="round"/>
<path d="M102.3,94 l4.5,-8.8 h16.2 l-4.6,8.8 z" fill="#a9c7e6" stroke="#8a8a8a" stroke-width="1.4" stroke-linejoin="round"/>
<rect x="134.8" y="75.6" width="20.6" height="21" rx="1.8" fill="#e4e4e4" stroke="#8a8a8a" stroke-width="1.5"/>
<rect x="138.50" y="76.80" width="13.00" height="9.50" fill="#f6a6ae" />
<rect x="138.50" y="76.80" width="13.00" height="3.00" fill="#f9c5ca" />
<rect x="139.30" y="89.50" width="11.50" height="6.50" fill="#a9a9a9" />
<rect x="147.00" y="90.50" width="2.60" height="4.50" fill="#ececec" />
<line x1="165.30" y1="72.50" x2="165.30" y2="99.50" stroke="#8c8c8c" stroke-width="1.2" />
<line x1="166.40" y1="72.50" x2="166.40" y2="99.50" stroke="#fafafa" stroke-width="0.8" />
<rect x="176.3" y="77" width="19.6" height="8.4" rx="1.2" fill="#f6f6f6" stroke="#8a8a8a" stroke-width="1.4"/>
<rect x="179.6" y="84.5" width="13.5" height="12" fill="#fbfbfb" stroke="#8a8a8a" stroke-width="1.4"/>
<rect x="181.50" y="88.00" width="9.00" height="1.20" fill="#6d8f7a" />
<rect x="181.50" y="90.80" width="6.00" height="1.20" fill="#6d8f7a" />
<rect x="181.50" y="93.40" width="9.00" height="1.20" fill="#6d8f7a" />
<rect x="192.30" y="79.00" width="2.00" height="1.60" fill="#58c058" />
<rect x="210.00" y="75.50" width="13.00" height="15.50" fill="#f2f2f2" />
<rect x="210" y="75.5" width="13" height="15.5" fill="none" stroke="#bdbdbd" stroke-width="1"/>
<line x1="222.86" y1="87.66" x2="229" y2="95.5" stroke="#2c2c2c" stroke-width="3.5" stroke-linecap="round"/>
<circle cx="219.5" cy="84.3" r="5.6" fill="url(#gLens)" stroke="#3a3a3a" stroke-width="2.2"/>
<line x1="240.30" y1="72.50" x2="240.30" y2="99.50" stroke="#8c8c8c" stroke-width="1.2" />
<line x1="241.40" y1="72.50" x2="241.40" y2="99.50" stroke="#fafafa" stroke-width="0.8" />
<path d="M255.5,76 L264.5,91 M266.5,76 L257.5,91" stroke="#6e6e6e" stroke-width="2.6" stroke-linecap="round"/>
<circle cx="256.2" cy="92.3" r="3" fill="none" stroke="#5c5c5c" stroke-width="1.9"/><circle cx="266" cy="92.3" r="3" fill="none" stroke="#5c5c5c" stroke-width="1.9"/>
<path d="M284.3,75.5 h7.5 l3.4,3.4 v11.3 h-10.9 z" fill="#fafafa" stroke="#8a8a8a" stroke-width="1.4" stroke-linejoin="round"/>
<rect x="286.30" y="80.10" width="6.60" height="1.00" fill="#bdbdbd" />
<rect x="286.30" y="82.30" width="6.60" height="1.00" fill="#bdbdbd" />
<rect x="286.30" y="84.50" width="6.60" height="1.00" fill="#bdbdbd" />
<rect x="286.30" y="86.70" width="6.60" height="1.00" fill="#bdbdbd" />
<path d="M294.3,82.5 h7.5 l3.4,3.4 v11.3 h-10.9 z" fill="#fafafa" stroke="#8a8a8a" stroke-width="1.4" stroke-linejoin="round"/>
<rect x="296.30" y="87.10" width="6.60" height="1.00" fill="#bdbdbd" />
<rect x="296.30" y="89.30" width="6.60" height="1.00" fill="#bdbdbd" />
<rect x="296.30" y="91.50" width="6.60" height="1.00" fill="#bdbdbd" />
<rect x="296.30" y="93.70" width="6.60" height="1.00" fill="#bdbdbd" />
<rect x="319.3" y="79" width="20.3" height="17.8" rx="1.5" fill="#e0ddd2" stroke="#8a8a8a" stroke-width="1.4"/>
<rect x="322.00" y="81.80" width="15.00" height="13.20" fill="#fbfbfb" />
<rect x="324.6" y="74.6" width="9.8" height="6.6" rx="1.8" fill="#f3d24a" stroke="#c9a21e" stroke-width="1.2"/>
<rect x="327.30" y="75.80" width="4.40" height="1.50" fill="#8a8a8a" />
<rect x="324.30" y="86.00" width="6.00" height="1.00" fill="#aaa" />
<rect x="324.30" y="88.80" width="3.60" height="1.00" fill="#aaa" />
<rect x="324.30" y="91.40" width="10.00" height="1.00" fill="#aaa" />
<line x1="349.40" y1="72.50" x2="349.40" y2="99.50" stroke="#8c8c8c" stroke-width="1.2" />
<line x1="350.50" y1="72.50" x2="350.50" y2="99.50" stroke="#fafafa" stroke-width="0.8" />
<path d="M361,83.2 L371.5,77.6 L370.6,81.6 C377.5,82 381,86 380,90.6 C379.3,94 376,96.6 370,96.3 C374.5,94.6 376,92 375,89.6 C374.3,87.6 372,86.8 369.5,87 L368.8,90.4 Z" fill="url(#gGreenArr)"/>
<line x1="390.40" y1="72.50" x2="390.40" y2="99.50" stroke="#8c8c8c" stroke-width="1.2" />
<line x1="391.50" y1="72.50" x2="391.50" y2="99.50" stroke="#fafafa" stroke-width="0.8" />
<circle cx="411.3" cy="86.2" r="7.6" fill="#f2eef4" stroke="#3c8fc4" stroke-width="2.3"/>
<path d="M398.8,86.2 h25 M411.3,73.8 v25" stroke="#3c8fc4" stroke-width="2.3"/>
<circle cx="411.3" cy="86.2" r="3" fill="#f6dfe6" opacity="0.8"/>
<path d="M433,75.8 h13.5 M433,75.8 v13" stroke="#6e6e6e" stroke-width="1.8" stroke-dasharray="2.2 1.5" fill="none"/>
<line x1="448.84000000000003" y1="88.83999999999999" x2="456" y2="96.3" stroke="#2c2c2c" stroke-width="3.5" stroke-linecap="round"/>
<circle cx="445.6" cy="85.6" r="5.4" fill="url(#gLens)" stroke="#3a3a3a" stroke-width="2.2"/>
<line x1="465.60" y1="72.50" x2="465.60" y2="99.50" stroke="#8c8c8c" stroke-width="1.2" />
<line x1="466.70" y1="72.50" x2="466.70" y2="99.50" stroke="#fafafa" stroke-width="0.8" />
<rect x="471.1" y="73.3" width="218" height="26.8" rx="2.2" fill="#ffffff" stroke="#8a8a8a" stroke-width="1.3"/>
<defs><linearGradient id="gF" x1="0" y1="0" x2="1" y2="1"><stop offset="0" stop-color="#3d8ee0"/><stop offset="1" stop-color="#0b3f9c"/></linearGradient></defs>
<rect x="476.20" y="79.00" width="15.80" height="15.60" fill="url(#gF)" />
<text x="480.20" y="92.00" font-size="15" fill="#ffffff" style='font-family:"Liberation Serif",serif' font-style="italic" font-weight="bold">f</text>
<text x="496.20" y="90.70" font-size="15.6" fill="#111111" textLength="169.0" lengthAdjust="spacingAndGlyphs" >Volume Price Confirmation In</text>
<path d="M673.6,84.4 l5.4,5.2 l5.4,-5.2" fill="none" stroke="#5a5a5a" stroke-width="1.3"/>
<line x1="692.70" y1="72.50" x2="692.70" y2="99.50" stroke="#8c8c8c" stroke-width="1.2" />
<line x1="691.00" y1="72.50" x2="691.00" y2="99.50" stroke="#fafafa" stroke-width="0.8" />
<ellipse cx="713.5" cy="88.6" rx="6.6" ry="7.8" fill="#f4d9d6" stroke="#6a6a6a" stroke-width="1"/>
<path d="M706,83 v-2.4 a7.5,6.2 0 0 1 15,0 v2.4 z" fill="#4a4a4a"/>
<rect x="706" y="80.6" width="15" height="2.2" fill="#1c1c1c"/>
<ellipse cx="713.5" cy="83.4" rx="11" ry="2.1" fill="#2b2b2b"/>
<rect x="709.60" y="86.60" width="1.60" height="1.80" fill="#5aa0e0" />
<rect x="715.60" y="86.60" width="1.60" height="1.80" fill="#5aa0e0" />
<rect x="712.70" y="88.60" width="1.30" height="3.30" fill="#6a5a5a" />
<text x="737.00" y="92.60" font-size="26" fill="#d8528c" textLength="15.0" lengthAdjust="spacingAndGlyphs" style='font-family:"Liberation Serif",serif' font-style="italic">f</text>
<text x="746.40" y="95.20" font-size="9.6" fill="#d8528c" textLength="12.2" lengthAdjust="spacingAndGlyphs" style='font-family:"Liberation Serif",serif' font-weight="bold">(x)</text>
<text x="774.60" y="95.60" font-size="27" fill="#2e8b36" textLength="13.0" lengthAdjust="spacingAndGlyphs" style='font-family:"Liberation Serif",serif'>$</text>
<path d="M805.6,79 h5.6 l2.4,13 v2.3 h-10.4 v-2.3 z" fill="#767676" stroke="#4a4a4a" stroke-width="1"/>
<rect x="806.10" y="75.70" width="4.60" height="3.60" fill="#d8b93a" />
<rect x="803.80" y="92.50" width="9.60" height="3.20" fill="#e2c240" />
<path d="M817.9,79 h5.6 l2.4,13 v2.3 h-10.4 v-2.3 z" fill="#767676" stroke="#4a4a4a" stroke-width="1"/>
<rect x="818.40" y="75.70" width="4.60" height="3.60" fill="#d8b93a" />
<rect x="816.10" y="92.50" width="9.60" height="3.20" fill="#e2c240" />
<rect x="811.30" y="83.00" width="6.60" height="4.60" fill="#5a5a5a" />
<rect x="812.60" y="84.20" width="1.30" height="1.30" fill="#e2c240" />
<rect x="815.20" y="84.20" width="1.30" height="1.30" fill="#e2c240" />
<path d="M845,81.6 h8.5 v-4.3 l8.3,8.8 l-8.3,8.8 v-4.3 h-8.5 z" fill="#3b9ad6"/>
<rect x="836.00" y="81.60" width="1.20" height="9.00" fill="#3b9ad6" />
<rect x="838.30" y="81.60" width="1.20" height="9.00" fill="#3b9ad6" />
<rect x="840.60" y="81.60" width="1.20" height="9.00" fill="#3b9ad6" />
<rect x="842.90" y="81.60" width="1.20" height="9.00" fill="#3b9ad6" />
<rect x="871.6" y="86.4" width="21.6" height="10.4" rx="1.6" fill="#f7f7f7" stroke="#8a8a8a" stroke-width="1.4"/>
<rect x="874.40" y="92.30" width="15.50" height="1.60" fill="#8a8a8a" />
<rect x="888.60" y="88.30" width="2.00" height="1.80" fill="#58c058" />
<path d="M879.3,75 h5.4 v4 h3.4 l-6.1,6.6 l-6.1,-6.6 h3.4 z" fill="#3b9ad6"/>
<rect x="910.6" y="75" width="6" height="13" rx="1.2" fill="#7d86a8" stroke="#5a6282" stroke-width="0.8"/>
<path d="M909,84 h9 M918,86.5 q7,2.5 5.6,8.2 M907,92.6 h13.5 M905,97 h19" stroke="#2f86c8" stroke-width="2" fill="none"/>
<rect x="939.3" y="74.6" width="20.6" height="22.8" fill="#f4f7fb" stroke="#55708c" stroke-width="1.5"/>
<rect x="942.00" y="78.00" width="3.30" height="3.00" fill="#b9c6d6" />
<rect x="946.60" y="78.30" width="10.60" height="0.90" fill="#c3cedd" />
<rect x="946.60" y="80.80" width="10.60" height="0.90" fill="#c3cedd" />
<rect x="942.00" y="85.50" width="3.30" height="3.00" fill="#b9c6d6" />
<rect x="942.00" y="92.60" width="14.00" height="0.90" fill="#c3cedd" />
<rect x="942.00" y="95.00" width="14.00" height="0.90" fill="#c3cedd" />
<line x1="956.16" y1="90.36" x2="961" y2="96" stroke="#2c2c2c" stroke-width="3.5" stroke-linecap="round"/>
<circle cx="953.4" cy="87.6" r="4.6" fill="url(#gLens)" stroke="#3a3a3a" stroke-width="2.2"/>
<path d="M974.3,79 l9,6.3 h-4 l2.3,5.6 l-2.3,1 l-2.3,-5.6 l-2.7,2.8 z" fill="#e4e4e4" stroke="#6a6a6a" stroke-width="1.1" stroke-linejoin="round"/>
<text x="983.20" y="94.20" font-size="22" fill="#2f9a2f" textLength="13.3" lengthAdjust="spacingAndGlyphs" font-weight="bold">?</text>
<line x1="1009.40" y1="66.00" x2="1009.40" y2="104.00" stroke="#8c8c8c" stroke-width="1.2" />
<line x1="1010.50" y1="66.00" x2="1010.50" y2="104.00" stroke="#fafafa" stroke-width="0.8" />
<rect x="1017.4" y="66" width="9" height="38" fill="url(#gGrip)"/>
<line x1="1026.40" y1="66.00" x2="1026.40" y2="104.00" stroke="#8e8e8e" stroke-width="1.1" />
<rect x="1020.40" y="83.80" width="2.60" height="2.60" fill="#555" />
<rect x="1031.8" y="74.3" width="14.6" height="12" rx="0.8" fill="url(#gWin)" stroke="#8a8a8a" stroke-width="1"/>
<rect x="1032.80" y="75.30" width="12.60" height="1.40" fill="#c4c4c4" />
<rect x="1035.6" y="79.3" width="14.6" height="12" rx="0.8" fill="url(#gWin)" stroke="#8a8a8a" stroke-width="1"/>
<rect x="1036.60" y="80.30" width="12.60" height="1.40" fill="#c4c4c4" />
<rect x="1040" y="85.6" width="14.6" height="12.4" rx="0.8" fill="url(#gWin)" stroke="#8a8a8a" stroke-width="1.3"/>
<rect x="1041.00" y="86.60" width="12.60" height="1.40" fill="#c4c4c4" />
<path d="M1041.5,94.28 l4.088,-3.7199999999999998 l2.336,2.2319999999999998 l2.92,-3.4720000000000004 l4.088,3.7199999999999998" fill="none" stroke="#9a9a9a" stroke-width="1"/>
<rect x="1065.6" y="74.6" width="11.8" height="23.2" rx="0.8" fill="url(#gWin)" stroke="#8a8a8a" stroke-width="1.3"/>
<rect x="1066.60" y="75.60" width="9.80" height="1.40" fill="#c4c4c4" />
<path d="M1067.1,90.83999999999999 l3.3040000000000007,-6.96 l1.8880000000000001,4.176 l2.3600000000000003,-6.496 l3.3040000000000007,6.96" fill="none" stroke="#9a9a9a" stroke-width="1"/>
<rect x="1077.4" y="74.6" width="11.8" height="23.2" rx="0.8" fill="url(#gWin)" stroke="#8a8a8a" stroke-width="1.3"/>
<rect x="1078.40" y="75.60" width="9.80" height="1.40" fill="#c4c4c4" />
<path d="M1078.9,90.83999999999999 l3.3040000000000007,-6.96 l1.8880000000000001,4.176 l2.3600000000000003,-6.496 l3.3040000000000007,6.96" fill="none" stroke="#9a9a9a" stroke-width="1"/>
<rect x="1099.4" y="74.6" width="23.6" height="11.6" rx="0.8" fill="url(#gWin)" stroke="#8a8a8a" stroke-width="1.3"/>
<rect x="1100.40" y="75.60" width="21.60" height="1.40" fill="#c4c4c4" />
<path d="M1100.9,82.72 l6.608000000000001,-3.48 l3.7760000000000002,2.088 l4.720000000000001,-3.248 l6.608000000000001,3.48" fill="none" stroke="#9a9a9a" stroke-width="1"/>
<rect x="1099.4" y="86.2" width="23.6" height="11.6" rx="0.8" fill="url(#gWin)" stroke="#8a8a8a" stroke-width="1.3"/>
<rect x="1100.40" y="87.20" width="21.60" height="1.40" fill="#c4c4c4" />
<path d="M1100.9,94.32000000000001 l6.608000000000001,-3.48 l3.7760000000000002,2.088 l4.720000000000001,-3.248 l6.608000000000001,3.48" fill="none" stroke="#9a9a9a" stroke-width="1"/>
<rect x="1132.6" y="76.6" width="11.6" height="9.2" rx="0.8" fill="url(#gWin)" stroke="#8a8a8a" stroke-width="1"/>
<rect x="1133.60" y="77.60" width="9.60" height="1.40" fill="#c4c4c4" />
<path d="M1134.1,83.03999999999999 l3.248,-2.76 l1.8559999999999999,1.656 l2.32,-2.576 l3.248,2.76" fill="none" stroke="#9a9a9a" stroke-width="1"/>
<rect x="1145" y="76.6" width="11.6" height="9.2" rx="0.8" fill="url(#gWin)" stroke="#8a8a8a" stroke-width="1"/>
<rect x="1146.00" y="77.60" width="9.60" height="1.40" fill="#c4c4c4" />
<path d="M1146.5,83.03999999999999 l3.248,-2.76 l1.8559999999999999,1.656 l2.32,-2.576 l3.248,2.76" fill="none" stroke="#9a9a9a" stroke-width="1"/>
<rect x="1132.6" y="86.6" width="11.6" height="9.2" rx="0.8" fill="url(#gWin)" stroke="#8a8a8a" stroke-width="1"/>
<rect x="1133.60" y="87.60" width="9.60" height="1.40" fill="#c4c4c4" />
<path d="M1134.1,93.03999999999999 l3.248,-2.76 l1.8559999999999999,1.656 l2.32,-2.576 l3.248,2.76" fill="none" stroke="#9a9a9a" stroke-width="1"/>
<rect x="1145" y="86.6" width="11.6" height="9.2" rx="0.8" fill="url(#gWin)" stroke="#8a8a8a" stroke-width="1"/>
<rect x="1146.00" y="87.60" width="9.60" height="1.40" fill="#c4c4c4" />
<path d="M1146.5,93.03999999999999 l3.248,-2.76 l1.8559999999999999,1.656 l2.32,-2.576 l3.248,2.76" fill="none" stroke="#9a9a9a" stroke-width="1"/>
<rect x="1166.4" y="76.6" width="24.3" height="19" rx="0.8" fill="url(#gWin)" stroke="#8a8a8a" stroke-width="1.3"/>
<rect x="1167.40" y="77.60" width="22.30" height="1.40" fill="#c4c4c4" />
<circle cx="1178.6" cy="86.1" r="4.3" fill="none" stroke="#3c3c3c" stroke-width="3.2"/>
<circle cx="1178.6" cy="86.1" r="6.6" fill="none" stroke="#3c3c3c" stroke-width="2.6" stroke-dasharray="2.6 2.58"/>
<line x1="1204.40" y1="66.00" x2="1204.40" y2="104.00" stroke="#8c8c8c" stroke-width="1.2" />
<line x1="1205.50" y1="66.00" x2="1205.50" y2="104.00" stroke="#fafafa" stroke-width="0.8" />
<rect x="0.00" y="105.60" width="35.00" height="6.60" fill="#f2f2f2" />
<rect x="0" y="112.2" width="35" height="7.6" fill="url(#gGripV)"/>
<line x1="0.00" y1="120.00" x2="35.00" y2="120.00" stroke="#a9a9a9" stroke-width="1" />
<rect x="15.60" y="113.80" width="2.60" height="2.60" fill="#555" />
<rect x="-2" y="123" width="32.2" height="30" rx="3" fill="#e8f2fc" stroke="#9ccbf6" stroke-width="1.3"/>
<path d="M6.3,131 l13.4,7.3 l-6,1.6 l6.6,8.6 l-3.6,2.6 l-6.4,-8.8 l-3,5.2 z" fill="#fbfdff" stroke="#2f7fd0" stroke-width="1.9" stroke-linejoin="round"/>
<rect x="2" y="160" width="23.6" height="22.599999999999994" fill="url(#gTool)"/>
<path d="M2,182.6 v-22.599999999999994 h23.6" fill="none" stroke="#fdfdfd" stroke-width="1.1"/>
<path d="M2,182.6 h23.6 v-22.599999999999994" fill="none" stroke="#a9a9a9" stroke-width="1.1"/>
<path d="M4.6,171.6 h18 M13.6,162.6 v18" stroke="#3a3a3a" stroke-width="1.9"/>
<line x1="0.00" y1="190.40" x2="26.00" y2="190.40" stroke="#8e8e8e" stroke-width="1.1" />
<line x1="0.00" y1="191.50" x2="26.00" y2="191.50" stroke="#fbfbfb" stroke-width="0.9" />
<rect x="2" y="200" width="23.6" height="22.599999999999994" fill="url(#gTool)"/>
<path d="M2,222.6 v-22.599999999999994 h23.6" fill="none" stroke="#fdfdfd" stroke-width="1.1"/>
<path d="M2,222.6 h23.6 v-22.599999999999994" fill="none" stroke="#a9a9a9" stroke-width="1.1"/>
<path d="M4,203 l19.6,17.4" stroke="#2e2e2e" stroke-width="1.7"/>
<rect x="2" y="232.6" width="23.6" height="22.400000000000006" fill="url(#gTool)"/>
<path d="M2,255 v-22.400000000000006 h23.6" fill="none" stroke="#fdfdfd" stroke-width="1.1"/>
<path d="M2,255 h23.6 v-22.400000000000006" fill="none" stroke="#a9a9a9" stroke-width="1.1"/>
<path d="M5,243.8 h17.4" stroke="#2e2e2e" stroke-width="1.9"/>
<rect x="2" y="265" width="23.6" height="22.600000000000023" fill="url(#gTool)"/>
<path d="M2,287.6 v-22.600000000000023 h23.6" fill="none" stroke="#fdfdfd" stroke-width="1.1"/>
<path d="M2,287.6 h23.6 v-22.600000000000023" fill="none" stroke="#a9a9a9" stroke-width="1.1"/>
<path d="M13.6,268 v17" stroke="#2e2e2e" stroke-width="1.9"/>
<rect x="2" y="297" width="23.6" height="23" fill="url(#gTool)"/>
<path d="M2,320 v-23 h23.6" fill="none" stroke="#fdfdfd" stroke-width="1.1"/>
<path d="M2,320 h23.6 v-23" fill="none" stroke="#a9a9a9" stroke-width="1.1"/>
<path d="M4.6,300.6 l18,17.6" stroke="#2e2e2e" stroke-width="1.6"/>
<text x="15.60" y="307.60" font-size="8.6" fill="#2e2e2e" >L</text>
<text x="4.60" y="318.60" font-size="8.6" fill="#2e2e2e" >S</text>
<line x1="0.00" y1="331.00" x2="26.00" y2="331.00" stroke="#8e8e8e" stroke-width="1.1" />
<line x1="0.00" y1="332.10" x2="26.00" y2="332.10" stroke="#fbfbfb" stroke-width="0.9" />
<rect x="0" y="340" width="35" height="8" fill="url(#gGripV)"/>
<rect x="15.40" y="342.80" width="2.60" height="2.60" fill="#555" />
<rect x="-1" y="352.6" width="14.3" height="30.0" fill="url(#gTool)"/>
<path d="M-1,382.6 v-30.0 h14.3" fill="none" stroke="#fdfdfd" stroke-width="1.1"/>
<path d="M-1,382.6 h14.3 v-30.0" fill="none" stroke="#a9a9a9" stroke-width="1.1"/>
<rect x="15.6" y="352.6" width="14.000000000000002" height="30.0" fill="url(#gTool)"/>
<path d="M15.6,382.6 v-30.0 h14.000000000000002" fill="none" stroke="#fdfdfd" stroke-width="1.1"/>
<path d="M15.6,382.6 h14.000000000000002 v-30.0" fill="none" stroke="#a9a9a9" stroke-width="1.1"/>
<path d="M8.3,363 v8 l-4.4,-4 z" fill="#1e1e1e"/><path d="M19.6,363 v8 l4.4,-4 z" fill="#1e1e1e"/>
<line x1="0.00" y1="387.60" x2="26.00" y2="387.60" stroke="#8e8e8e" stroke-width="1.1" />
<line x1="0.00" y1="388.70" x2="26.00" y2="388.70" stroke="#fbfbfb" stroke-width="0.9" />
<rect x="2" y="395.6" width="23.6" height="23.19999999999999" fill="url(#gTool)"/>
<path d="M2,418.8 v-23.19999999999999 h23.6" fill="none" stroke="#fdfdfd" stroke-width="1.1"/>
<path d="M2,418.8 h23.6 v-23.19999999999999" fill="none" stroke="#a9a9a9" stroke-width="1.1"/>
<text x="4.60" y="411.60" font-size="11" fill="#2e2e2e" textLength="18.4" lengthAdjust="spacingAndGlyphs" >abc</text>
<rect x="2" y="428.3" width="23.6" height="23.0" fill="url(#gTool)"/>
<path d="M2,451.3 v-23.0 h23.6" fill="none" stroke="#fdfdfd" stroke-width="1.1"/>
<path d="M2,451.3 h23.6 v-23.0" fill="none" stroke="#a9a9a9" stroke-width="1.1"/>
<line x1="9.00" y1="430.00" x2="9.00" y2="450.60" stroke="#5a5a5a" stroke-width="1.1" />
<line x1="15.60" y1="430.00" x2="15.60" y2="450.60" stroke="#5a5a5a" stroke-width="1.1" />
<line x1="22.00" y1="430.00" x2="22.00" y2="450.60" stroke="#5a5a5a" stroke-width="1.1" />
<line x1="3.00" y1="436.00" x2="25.00" y2="436.00" stroke="#5a5a5a" stroke-width="1.1" />
<line x1="3.00" y1="441.60" x2="25.00" y2="441.60" stroke="#5a5a5a" stroke-width="1.1" />
<line x1="3.00" y1="447.60" x2="25.00" y2="447.60" stroke="#5a5a5a" stroke-width="1.1" />
<line x1="0.00" y1="459.50" x2="26.00" y2="459.50" stroke="#8e8e8e" stroke-width="1.1" />
<line x1="0.00" y1="460.60" x2="26.00" y2="460.60" stroke="#fbfbfb" stroke-width="0.9" />
<ellipse cx="13.6" cy="479.4" rx="10.8" ry="6.8" fill="url(#gTool)" stroke="#3e3e3e" stroke-width="1.2"/>
<rect x="3" y="506" width="21.6" height="14" fill="url(#gTool)" stroke="#3e3e3e" stroke-width="1.2"/>
<path d="M3,551.6 l10.6,-14.6 l10.6,14.6 z" fill="url(#gTool)" stroke="#3e3e3e" stroke-width="1.2" stroke-linejoin="round"/>
<line x1="0.00" y1="568.80" x2="35.00" y2="568.80" stroke="#8e8e8e" stroke-width="1.1" />
<rect x="1461.30" y="953.30" width="182.00" height="6.90" fill="#8c8c8c" />
<line x1="1667.60" y1="946.00" x2="1667.60" y2="966.00" stroke="#8e8e8e" stroke-width="1.1" />
<line x1="1728.00" y1="946.00" x2="1728.00" y2="966.00" stroke="#8e8e8e" stroke-width="1.1" />
<line x1="1840.40" y1="946.00" x2="1840.40" y2="966.00" stroke="#8e8e8e" stroke-width="1.1" />
<path d="M1679.4,958 a6,6 0 0 1 10,-6 M1691,955 a6,6 0 0 1 -10,6" fill="none" stroke="#4a4a4a" stroke-width="2.6"/>
<path d="M1686.6,948.6 l4.4,4.6 l-6,1.2 z M1683.6,964.6 l-4.4,-4.6 l6,-1.2 z" fill="#4a4a4a"/>
<rect x="1703.00" y="947.60" width="16.00" height="17.00" fill="#e6e6e6" />
<rect x="1710.00" y="951.00" width="1.80" height="10.00" fill="#4a4a4a" />
<rect x="1736.00" y="947.60" width="16.00" height="17.00" fill="#e6e6e6" />
<path d="M1744.6,950 v13 M1741.6,953 l3,-3.4 l3,3.4 M1741.6,960 l3,3.4 l3,-3.4" fill="none" stroke="#4a4a4a" stroke-width="1.7"/>
<path d="M1763,956.2 h16 M1771,948.2 v16 M1765.6,953.6 l-2.8,2.6 l2.8,2.6 M1776.4,953.6 l2.8,2.6 l-2.8,2.6 M1768.4,950.8 l2.6,-2.8 l2.6,2.8 M1768.4,961.6 l2.6,2.8 l2.6,-2.8" fill="none" stroke="#4a4a4a" stroke-width="1.8"/>
<circle cx="1797.2" cy="956.2" r="6.6" fill="none" stroke="#5a5a5a" stroke-width="1.3"/>
<rect x="1793.60" y="955.30" width="7.20" height="1.90" fill="#4a4a4a" />
<circle cx="1823.4" cy="956.2" r="6.6" fill="none" stroke="#5a5a5a" stroke-width="1.3"/>
<rect x="1819.80" y="955.30" width="7.20" height="1.90" fill="#4a4a4a" />
<rect x="1822.45" y="952.60" width="1.90" height="7.20" fill="#4a4a4a" />
<path d="M1861,951.6 v9.6 l-6,-4.8 z" fill="#c9c9c9"/><path d="M1881,951.6 v9.6 l6,-4.8 z" fill="#c9c9c9"/>
<rect x="1901.3" y="949.3" width="14" height="13.6" fill="#f4f4f4" stroke="#4a4a4a" stroke-width="1.3"/>
<rect x="1901.30" y="949.30" width="14.00" height="2.60" fill="#4a4a4a" />
<rect x="1903.60" y="954.30" width="10.00" height="1.10" fill="#4a4a4a" />
<rect x="1903.60" y="957.30" width="10.00" height="1.10" fill="#4a4a4a" />
<rect x="1903.60" y="960.30" width="10.00" height="1.10" fill="#4a4a4a" />
<circle cx="1886.6" cy="920.6" r="10.3" fill="#fff4f4" stroke="#ff2020" stroke-width="1.3"/>
<circle cx="1882.8" cy="917.3" r="1.5" fill="#ff2020"/><circle cx="1890.4" cy="917.3" r="1.5" fill="#ff2020"/>
<path d="M1881.3,926.3 q5.3,-5 10.6,0" fill="none" stroke="#ff2020" stroke-width="1.3"/>
<rect x="0.5" y="974" width="8" height="38" fill="url(#gGrip)"/>
<rect x="3.00" y="992.60" width="2.60" height="2.60" fill="#555" />
<line x1="9.00" y1="974.00" x2="9.00" y2="1012.00" stroke="#9a9a9a" stroke-width="1" />
<rect x="10.8" y="981.4" width="161.0" height="24" rx="2.6" fill="#fff" stroke="#9a9a9a" stroke-width="1.3"/>
<line x1="30.00" y1="994.00" x2="131.30" y2="994.00" stroke="#2a2a2a" stroke-width="1.3" />
<path d="M156.20000000000002,991.6 l5,4.8 l5,-4.8" fill="none" stroke="#5a5a5a" stroke-width="1.3"/>
<line x1="176.00" y1="980.00" x2="176.00" y2="1007.00" stroke="#9a9a9a" stroke-width="1.1" />
<rect x="180.6" y="981.4" width="123.79999999999998" height="24" rx="2.6" fill="#fff" stroke="#9a9a9a" stroke-width="1.3"/>
<line x1="195.00" y1="994.00" x2="269.00" y2="994.00" stroke="#2a2a2a" stroke-width="1.3" />
<path d="M288.79999999999995,991.6 l5,4.8 l5,-4.8" fill="none" stroke="#5a5a5a" stroke-width="1.3"/>
<line x1="313.40" y1="974.00" x2="313.40" y2="1012.00" stroke="#c9c9c9" stroke-width="1" />
<rect x="321" y="974" width="8" height="38" fill="url(#gGrip)"/>
<rect x="323.60" y="992.60" width="2.60" height="2.60" fill="#555" />
<line x1="329.60" y1="974.00" x2="329.60" y2="1012.00" stroke="#9a9a9a" stroke-width="1" />
<rect x="334.6" y="980.6" width="12" height="12" fill="#e6e6fa" stroke="#d0d0d0" stroke-width="0.8"/>
<rect x="349.6" y="980.6" width="12" height="12" fill="#ffd700" stroke="#d0d0d0" stroke-width="0.8"/>
<rect x="364.6" y="980.6" width="12" height="12" fill="#ffff00" stroke="#d0d0d0" stroke-width="0.8"/>
<rect x="379.6" y="980.6" width="12" height="12" fill="#696969" stroke="#d0d0d0" stroke-width="0.8"/>
<rect x="394.6" y="980.6" width="12" height="12" fill="#32cd32" stroke="#d0d0d0" stroke-width="0.8"/>
<rect x="409.6" y="980.6" width="12" height="12" fill="#fffde0" stroke="#d0d0d0" stroke-width="0.8"/>
<rect x="424.6" y="980.6" width="12" height="12" fill="#ff6a1f" stroke="#d0d0d0" stroke-width="0.8"/>
<rect x="439.6" y="980.6" width="12" height="12" fill="#98fb98" stroke="#d0d0d0" stroke-width="0.8"/>
<rect x="334.6" y="995.8" width="12" height="12" fill="#8b0000" stroke="#d0d0d0" stroke-width="0.8"/>
<rect x="349.6" y="995.8" width="12" height="12" fill="#708090" stroke="#d0d0d0" stroke-width="0.8"/>
<rect x="364.6" y="995.8" width="12" height="12" fill="#0000ff" stroke="#d0d0d0" stroke-width="0.8"/>
<rect x="379.6" y="995.8" width="12" height="12" fill="#009000" stroke="#d0d0d0" stroke-width="0.8"/>
<rect x="394.6" y="995.8" width="12" height="12" fill="#ff0000" stroke="#d0d0d0" stroke-width="0.8"/>
<rect x="409.6" y="995.8" width="12" height="12" fill="#000000" stroke="#d0d0d0" stroke-width="0.8"/>
<rect x="424.6" y="995.8" width="12" height="12" fill="#3a7ca5" stroke="#d0d0d0" stroke-width="0.8"/>
<rect x="439.6" y="995.8" width="12" height="12" fill="#87ceeb" stroke="#d0d0d0" stroke-width="0.8"/>
<rect x="394.6" y="995.8" width="12" height="12" fill="none" stroke="#ffffff" stroke-width="1" stroke-dasharray="1.2 1.2"/>
<path d="M454.6,992 h7 l-3.5,3.6 z" fill="#111"/>
<line x1="474.30" y1="974.00" x2="474.30" y2="1012.00" stroke="#9a9a9a" stroke-width="1.1" />
<rect x="481.6" y="974" width="8" height="38" fill="url(#gGrip)"/>
<rect x="484.20" y="992.60" width="2.60" height="2.60" fill="#555" />
<line x1="490.40" y1="974.00" x2="490.40" y2="1012.00" stroke="#9a9a9a" stroke-width="1" />
<rect x="498.8" y="987.6" width="19.8" height="15.2" rx="1" fill="#fbfbfb" stroke="#9fb3c8" stroke-width="1.3"/>
<rect x="499.80" y="988.40" width="17.80" height="1.60" fill="#b9cde6" />
<path d="M501.4,999.6 l4,-3.6 l2.6,1.6" fill="none" stroke="#e03030" stroke-width="1.3"/>
<text x="509.10" y="1001.20" font-size="11.5" fill="#222" style='font-family:"Liberation Serif",serif'>1</text>
<rect x="532.5" y="987.6" width="19.8" height="15.2" rx="1" fill="#fbfbfb" stroke="#9fb3c8" stroke-width="1.3"/>
<rect x="533.55" y="988.40" width="17.80" height="1.60" fill="#b9cde6" />
<path d="M535.1,999.6 l4,-3.6 l2.6,1.6" fill="none" stroke="#e03030" stroke-width="1.3"/>
<text x="542.85" y="1001.20" font-size="11.5" fill="#222" style='font-family:"Liberation Serif",serif'>2</text>
<rect x="566.3" y="987.6" width="19.8" height="15.2" rx="1" fill="#fbfbfb" stroke="#9fb3c8" stroke-width="1.3"/>
<rect x="567.30" y="988.40" width="17.80" height="1.60" fill="#b9cde6" />
<path d="M568.9,999.6 l4,-3.6 l2.6,1.6" fill="none" stroke="#e03030" stroke-width="1.3"/>
<text x="576.60" y="1001.20" font-size="11.5" fill="#222" style='font-family:"Liberation Serif",serif'>3</text>
<rect x="600.0" y="987.6" width="19.8" height="15.2" rx="1" fill="#fbfbfb" stroke="#9fb3c8" stroke-width="1.3"/>
<rect x="601.05" y="988.40" width="17.80" height="1.60" fill="#b9cde6" />
<path d="M602.6,999.6 l4,-3.6 l2.6,1.6" fill="none" stroke="#e03030" stroke-width="1.3"/>
<text x="610.35" y="1001.20" font-size="11.5" fill="#222" style='font-family:"Liberation Serif",serif'>4</text>
<rect x="633.8" y="987.6" width="19.8" height="15.2" rx="1" fill="#fbfbfb" stroke="#9fb3c8" stroke-width="1.3"/>
<rect x="634.80" y="988.40" width="17.80" height="1.60" fill="#b9cde6" />
<path d="M636.4,999.6 l4,-3.6 l2.6,1.6" fill="none" stroke="#e03030" stroke-width="1.3"/>
<text x="644.10" y="1001.20" font-size="11.5" fill="#222" style='font-family:"Liberation Serif",serif'>5</text>
<rect x="667.5" y="987.6" width="19.8" height="15.2" rx="1" fill="#fbfbfb" stroke="#9fb3c8" stroke-width="1.3"/>
<rect x="668.55" y="988.40" width="17.80" height="1.60" fill="#b9cde6" />
<path d="M670.1,999.6 l4,-3.6 l2.6,1.6" fill="none" stroke="#e03030" stroke-width="1.3"/>
<text x="677.85" y="1001.20" font-size="11.5" fill="#222" style='font-family:"Liberation Serif",serif'>6</text>
<line x1="703.40" y1="974.00" x2="703.40" y2="1012.00" stroke="#9a9a9a" stroke-width="1.1" />
<line x1="704.50" y1="974.00" x2="704.50" y2="1012.00" stroke="#fbfbfb" stroke-width="0.9" />
<defs>
<linearGradient id="gWinLogo" x1="0" y1="0" x2="1" y2="1"><stop offset="0" stop-color="#7fdcff"/><stop offset="1" stop-color="#0f8fe8"/></linearGradient>
<linearGradient id="gChat" x1="0" y1="0" x2="1" y2="1"><stop offset="0" stop-color="#8a5fc0"/><stop offset="1" stop-color="#5f8ff0"/></linearGradient>
<linearGradient id="gMS" x1="0" y1="0" x2="0" y2="1"><stop offset="0" stop-color="#6a6a6a"/><stop offset="0.55" stop-color="#0a0a0a"/><stop offset="1" stop-color="#000"/></linearGradient>
<linearGradient id="gEdge" x1="0" y1="0" x2="1" y2="1"><stop offset="0" stop-color="#2fc1e8"/><stop offset="0.5" stop-color="#1b7fd4"/><stop offset="1" stop-color="#0f59a8"/></linearGradient>
<linearGradient id="gEdge2" x1="0" y1="0" x2="1" y2="0"><stop offset="0" stop-color="#35c1f1"/><stop offset="1" stop-color="#5fd870"/></linearGradient>
<linearGradient id="gFold" x1="0" y1="0" x2="0" y2="1"><stop offset="0" stop-color="#ffd75e"/><stop offset="1" stop-color="#f7b928"/></linearGradient>
</defs>
<circle cx="41" cy="1050.3" r="12.6" fill="url(#gSun)"/>
<text x="65.50" y="1046.30" font-size="15.6" fill="#fff" textLength="30.7" lengthAdjust="spacingAndGlyphs" >34°C</text>
<text x="65.50" y="1066.30" font-size="15.6" fill="#fff" textLength="20.3" lengthAdjust="spacingAndGlyphs" >Sol</text>
<rect x="506" y="1036" width="13.7" height="13.7" rx="1" fill="url(#gWinLogo)"/>
<rect x="521.3" y="1036" width="13.7" height="13.7" rx="1" fill="url(#gWinLogo)"/>
<rect x="506" y="1051.3" width="13.7" height="13.7" rx="1" fill="url(#gWinLogo)"/>
<rect x="521.3" y="1051.3" width="13.7" height="13.7" rx="1" fill="url(#gWinLogo)"/>
<line x1="569.6" y1="1057.3" x2="564.6" y2="1062.6" stroke="#dcdcdc" stroke-width="3.6" stroke-linecap="round"/>
<circle cx="577.6" cy="1048.8" r="10.4" fill="#3d3a44" stroke="#e9e9e9" stroke-width="2.8"/>
<path d="M617,1063.6 q3,-1.6 3.6,-5.6 l6,4 q-4,2.6 -9.6,1.6 z" fill="#6a58c0"/>
<circle cx="631" cy="1049.6" r="14.2" fill="url(#gChat)"/>
<rect x="622.6" y="1044.6" width="11.6" height="10.6" rx="2" fill="#fff"/><path d="M635,1049 l4.6,-3.3 v8.6 l-4.6,-3.3 z" fill="#fff"/>
<rect x="683.2" y="1039.6" width="15.6" height="21.6" rx="0.8" fill="#fff" stroke="#2b579a" stroke-width="1.2"/>
<rect x="689.20" y="1042.60" width="7.60" height="1.40" fill="#2b579a" />
<rect x="689.20" y="1045.60" width="7.60" height="1.40" fill="#2b579a" />
<rect x="689.20" y="1048.60" width="7.60" height="1.40" fill="#2b579a" />
<rect x="689.20" y="1051.60" width="7.60" height="1.40" fill="#2b579a" />
<rect x="689.20" y="1054.60" width="7.60" height="1.40" fill="#2b579a" />
<rect x="689.20" y="1057.60" width="7.60" height="1.40" fill="#2b579a" />
<path d="M671.6,1039.3 l16,-3 v28 l-16,-3 z" fill="#2b579a"/>
<text x="679.60" y="1056.20" font-size="15.5" fill="#fff" text-anchor="middle" font-weight="bold">W</text>
<rect x="726.3" y="1035.2" width="29.6" height="29.8" rx="3.3" fill="url(#gMS)"/>
<path d="M733.3,1063 l1.6,-10.6 h3 l-1.4,10.6 z M738.9,1063 l2.4,-18 h3.2 l-2.2,18 z M744.9,1063 l3.2,-26 h3.4 l-3,26 z" fill="#f08a1e"/>
<path d="M781,1041.6 q0,-2.6 2.6,-2.6 h7 l3,3 h15 q2.6,0 2.6,2.6 v17.6 q0,1.6 -1.6,1.6 h-27 q-1.6,0 -1.6,-1.6 z" fill="url(#gFold)"/>
<path d="M781,1041 q0,-2.6 2.6,-2.6 h7 l3,3.4 h-12.6 z" fill="#e8a317"/>
<rect x="785.6" y="1055" width="20.6" height="9" rx="1.6" fill="#1f8ae0"/>
<rect x="789.00" y="1057.80" width="14.00" height="1.50" fill="#0f5fae" />
<rect x="826.3" y="1025" width="49.5" height="49.7" rx="5.5" fill="#452527"/>
<circle cx="850.4" cy="1050.3" r="13.8" fill="#fbbc05"/>
<path d="M850.4,1050.3 L838.45,1043.40 A13.8,13.8 0 0 1 862.35,1043.40 Z" fill="#ea4335"/>
<path d="M850.4,1050.3 L850.40,1064.10 A13.8,13.8 0 0 1 838.45,1043.40 Z" fill="#34a853"/>
<path d="M850.4,1050.3 L862.35,1043.40 A13.8,13.8 0 0 1 850.40,1064.10 Z" fill="#fbbc05"/>
<circle cx="850.4" cy="1050.3" r="6.49" fill="#fff"/>
<circle cx="850.4" cy="1050.3" r="4.97" fill="#4285f4"/>
<circle cx="861.6" cy="1038.8" r="10.2" fill="#ec6a0b"/>
<text x="861.60" y="1043.40" font-size="12.5" fill="#ffe9d6" text-anchor="middle" font-weight="bold">N</text>
<rect x="847" y="1070.4" width="8.2" height="3.6" rx="1.8" fill="#f29bb3"/>
<rect x="903.6" y="1039.6" width="15.6" height="21.6" rx="0.8" fill="#fff" stroke="#d24726" stroke-width="1.2"/>
<circle cx="913.6" cy="1046" r="3.3" fill="#d24726"/>
<rect x="910.00" y="1052.60" width="7.60" height="1.40" fill="#d24726" />
<rect x="910.00" y="1055.60" width="7.60" height="1.40" fill="#d24726" />
<path d="M892,1039.3 l16,-3 v28 l-16,-3 z" fill="#d24726"/>
<text x="900.00" y="1056.20" font-size="15.5" fill="#fff" text-anchor="middle" font-weight="bold">P</text>
<path d="M950,1063.6 l-1.6,-4.6 h25 l-1.6,4.6 z" fill="#f08200"/>
<path d="M952.6,1058 l6.6,-20.6 q1.8,-2 3.6,0 l6.6,20.6 z" fill="#ff8c00"/>
<path d="M957.6,1042.6 h6.8 l1.6,5 h-10 z M954.6,1052 h12.8 l1.3,4 h-15.4 z" fill="#f2f2f2"/>
<circle cx="1016" cy="1050.2" r="14.8" fill="url(#gEdge)"/>
<path d="M1001.6,1047 q1,-11.6 14.4,-11.8 q13,0.2 14.8,12.6 q0.2,5.6 -6.6,6.2 h-7.6 q0,-4.6 -2.6,-6.4 q-6,-4 -12.4,-0.6 z" fill="url(#gEdge2)"/>
<path d="M1010.6,1052.6 q2.6,-5.6 7,-3.8 q2.6,2 1,5.8 q2,3.6 7.6,2.6 q-4,6.6 -10.6,5.8 q-6.4,-2.6 -5,-10.4 z" fill="#0d4f94"/>
<rect x="1068.6" y="1039.6" width="15.6" height="21.6" rx="0.8" fill="#fff" stroke="#3955a3" stroke-width="1.2"/>
<rect x="1074.6" y="1050" width="6" height="6" fill="none" stroke="#3955a3" stroke-width="1.2"/><path d="M1079.6,1042 l2.6,2.6 l-2.6,2.6 l-2.6,-2.6 z" fill="none" stroke="#3955a3" stroke-width="1.1"/>
<path d="M1057,1039.3 l16,-3 v28 l-16,-3 z" fill="#3955a3"/>
<text x="1065.00" y="1056.20" font-size="15.5" fill="#fff" text-anchor="middle" font-weight="bold">V</text>
<rect x="1123.6" y="1039.6" width="15.6" height="21.6" rx="0.8" fill="#fff" stroke="#1e7145" stroke-width="1.2"/>
<rect x="1129.00" y="1041.60" width="9.00" height="1.20" fill="#1e7145" />
<rect x="1129.00" y="1045.40" width="9.00" height="1.20" fill="#1e7145" />
<rect x="1129.00" y="1049.20" width="9.00" height="1.20" fill="#1e7145" />
<rect x="1129.00" y="1053.00" width="9.00" height="1.20" fill="#1e7145" />
<rect x="1129.00" y="1056.80" width="9.00" height="1.20" fill="#1e7145" />
<rect x="1131.80" y="1041.00" width="1.20" height="18.60" fill="#1e7145" />
<rect x="1135.20" y="1041.00" width="1.20" height="18.60" fill="#1e7145" />
<path d="M1112,1039.3 l16,-3 v28 l-16,-3 z" fill="#1e7145"/>
<text x="1120.00" y="1056.20" font-size="15.5" fill="#fff" text-anchor="middle" font-weight="bold">X</text>
<circle cx="1181" cy="1050.3" r="13.8" fill="#fbbc05"/>
<path d="M1181,1050.3 L1169.05,1043.40 A13.8,13.8 0 0 1 1192.95,1043.40 Z" fill="#ea4335"/>
<path d="M1181,1050.3 L1181.00,1064.10 A13.8,13.8 0 0 1 1169.05,1043.40 Z" fill="#34a853"/>
<path d="M1181,1050.3 L1192.95,1043.40 A13.8,13.8 0 0 1 1181.00,1064.10 Z" fill="#fbbc05"/>
<circle cx="1181" cy="1050.3" r="6.49" fill="#fff"/>
<circle cx="1181" cy="1050.3" r="4.97" fill="#4285f4"/>
<rect x="1224" y="1035" width="23.2" height="30" rx="2.2" fill="#76808e"/>
<rect x="1227" y="1038" width="17.2" height="5.6" fill="#4cc2ff"/>
<rect x="1227.00" y="1046.00" width="5.00" height="5.00" fill="#d6dde6" />
<rect x="1233.00" y="1046.00" width="5.00" height="5.00" fill="#d6dde6" />
<rect x="1239.00" y="1046.00" width="5.00" height="5.00" fill="#d6dde6" />
<rect x="1227.00" y="1052.00" width="5.00" height="5.00" fill="#d6dde6" />
<rect x="1233.00" y="1052.00" width="5.00" height="5.00" fill="#d6dde6" />
<rect x="1239.00" y="1052.00" width="5.00" height="5.00" fill="#17418f" />
<rect x="1227.00" y="1058.00" width="5.00" height="5.00" fill="#d6dde6" />
<rect x="1233.00" y="1058.00" width="5.00" height="5.00" fill="#d6dde6" />
<rect x="1239.00" y="1058.00" width="5.00" height="5.00" fill="#17418f" />
<rect x="1239.00" y="1052.00" width="5.00" height="11.00" fill="#17418f" />
<rect x="1275.80" y="1035.00" width="30.40" height="30.00" fill="#008080" />
<path d="M1283,1061.6 q-1.6,-3 0.6,-5.6 q-6,-7 0,-10.6 q4,-1.6 6.4,1.6 q1,-3 0,-4.6 h2 q-1,1.6 0,4.6 q2.4,-3.2 6.4,-1.6 q6,3.6 0,10.6 q2.2,2.6 0.6,5.6 z" fill="#fff" stroke="#111" stroke-width="0.9"/>
<path d="M1291,1037.6 v5 M1288.8,1039.6 h4.4" stroke="#111" stroke-width="1.2"/>
<path d="M1283.6,1056 q7.4,-2.6 14.8,0 M1283.3,1058.8 q7.7,-2.4 15.4,0" fill="none" stroke="#111" stroke-width="0.9"/>
<rect x="1321.3" y="1025" width="49.3" height="49.7" rx="5.5" fill="#2f2d38"/>
<rect x="1331" y="1035.2" width="29.6" height="29.8" rx="3.3" fill="url(#gMS)"/>
<path d="M1338,1063 l1.6,-10.6 h3 l-1.4,10.6 z M1343.6,1063 l2.4,-18 h3.2 l-2.2,18 z M1349.6,1063 l3.2,-26 h3.4 l-3,26 z" fill="#f08a1e"/>
<rect x="1335.8" y="1070.4" width="20" height="3.6" rx="1.8" fill="#4cc2ff"/>
<rect x="1386.8" y="1035.6" width="28.6" height="28.8" rx="4" fill="none" stroke="#a01030" stroke-width="1.3"/>
<text x="1390.30" y="1059.60" font-size="15.5" fill="#b4143c" textLength="22.0" lengthAdjust="spacingAndGlyphs" >Pro</text>
<rect x="1404.00" y="1041.60" width="3.60" height="1.30" fill="#b4143c" />
<rect x="1392.60" y="1044.80" width="2.60" height="1.00" fill="#b4143c" />
<rect x="682" y="1070.4" width="8" height="3.4" rx="1.7" fill="#9a9a9a"/>
<rect x="1122.3" y="1070.4" width="8" height="3.4" rx="1.7" fill="#9a9a9a"/>
<rect x="1397" y="1070.4" width="8" height="3.4" rx="1.7" fill="#9a9a9a"/>
<path d="M1628,1054 l7.8,-7.6 l7.8,7.6" fill="none" stroke="#fff" stroke-width="1.6"/>
<path d="M1657,1055 q-1.6,-5 3.6,-5.6 q2.4,-6 8.4,-3 q5.6,0.6 4.6,6 q-0.6,2.6 -3,2.6 z" fill="#e4e4e4"/>
<path d="M1657,1055 q-1.6,-5 3.6,-5.6 q1,-2.6 3.2,-3.3 l2,9 z" fill="#9a9a9a"/>
<circle cx="1670.6" cy="1055" r="5.6" fill="#e81123"/><path d="M1668.3,1052.7 l4.6,4.6 M1672.9,1052.7 l-4.6,4.6" stroke="#fff" stroke-width="1.4"/>
<circle cx="1700.6" cy="1056.3" r="1.7" fill="#fff"/>
<path d="M1696.92,1052.62 A5.2,5.2 0 0 1 1704.28,1052.62" fill="none" stroke="#fff" stroke-width="1.6"/>
<path d="M1694.02,1049.72 A9.3,9.3 0 0 1 1707.18,1049.72" fill="none" stroke="#fff" stroke-width="1.6"/>
<path d="M1691.12,1046.82 A13.4,13.4 0 0 1 1710.08,1046.82" fill="none" stroke="#fff" stroke-width="1.6"/>
<path d="M1721.6,1047 h3.4 l5,-4.4 v15 l-5,-4.4 h-3.4 z" fill="none" stroke="#fff" stroke-width="1.4" stroke-linejoin="round"/>
<path d="M1732.57,1047.14 A4,4 0 0 1 1732.57,1053.26" fill="none" stroke="#fff" stroke-width="1.4"/>
<path d="M1734.89,1044.38 A7.6,7.6 0 0 1 1734.89,1056.02" fill="none" stroke="#fff" stroke-width="1.4"/>
<path d="M1737.49,1041.88 A11.2,11.2 0 0 1 1737.49,1058.52" fill="none" stroke="#fff" stroke-width="1.4"/>
<rect x="1754.6" y="1044.6" width="14" height="11.4" rx="1.6" fill="none" stroke="#fff" stroke-width="1.5"/>
<rect x="1769.30" y="1047.60" width="2.00" height="5.40" fill="#fff" />
<rect x="1756.60" y="1046.60" width="4.60" height="7.40" fill="#fff" />
<path d="M1753.6,1041.6 v3 M1757,1041.6 v3 M1752.3,1044.6 h6 v2.6 q-3,3 -6,0 z" stroke="#fff" stroke-width="1.2" fill="#201d25"/>
<text x="1865.20" y="1045.20" font-size="15.6" fill="#fff" textLength="33.3" lengthAdjust="spacingAndGlyphs" text-anchor="end" >18:10</text>
<text x="1865.20" y="1065.20" font-size="15.6" fill="#fff" textLength="74.6" lengthAdjust="spacingAndGlyphs" text-anchor="end" >19/08/2022</text>
<circle cx="1885" cy="1050.6" r="10" fill="#4cc2ff"/>
<text x="1885.00" y="1055.60" font-size="14" fill="#10202a" text-anchor="middle" >1</text>
<rect x="1842.00" y="1016.60" width="25.00" height="3.20" fill="#e9e9e9" />
<rect x="1872.00" y="1016.60" width="25.60" height="3.20" fill="#d9d9d9" />
<rect x="1853.60" y="1016.60" width="1.60" height="3.20" fill="#3fae3f" />
</svg>
</body></html>
